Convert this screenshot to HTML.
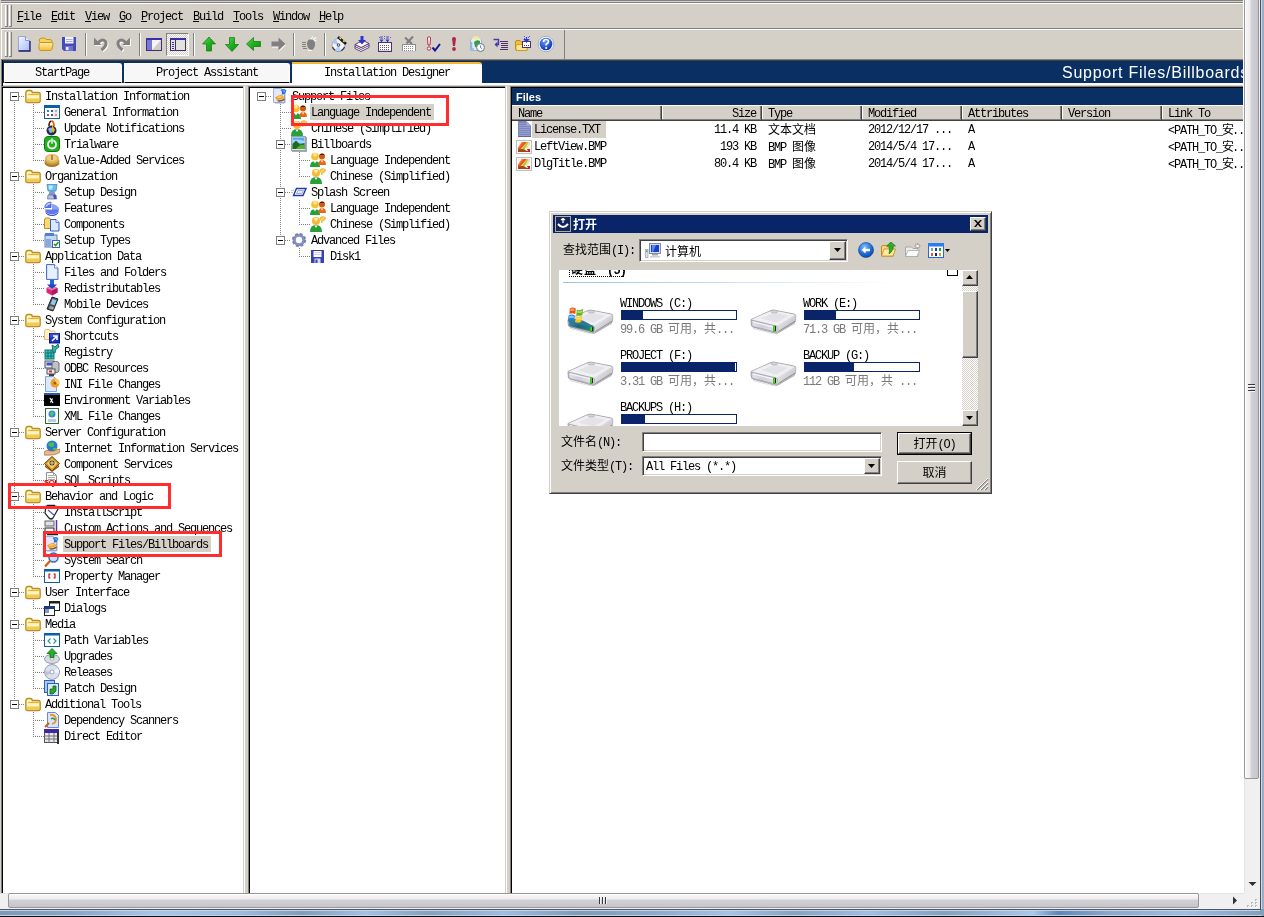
<!DOCTYPE html>
<html lang="en"><head><meta charset="utf-8"><title>InstallShield - Support Files/Billboards</title>
<style>
html,body{margin:0;padding:0}
body{will-change:transform;width:1264px;height:917px;overflow:hidden;background:#D4D0C8;position:relative;font-family:"Liberation Mono","Noto Sans CJK SC",monospace;font-size:12px;color:#000}
div,svg{position:absolute}
div{box-sizing:border-box}
.t{font-family:"Liberation Mono","Noto Sans CJK SC",monospace;font-size:12px;letter-spacing:-1.2px;white-space:pre;line-height:16px;height:16px}
.c{font-family:"Liberation Sans","Noto Sans CJK SC",sans-serif;font-size:12px;letter-spacing:0}
.g{color:#7A7A7A}
.u{text-decoration:underline;text-underline-offset:1px}
.hd{font-family:"Liberation Sans",sans-serif;font-weight:bold;color:#fff;white-space:pre}
</style></head>
<body>
<!-- top chrome -->
<div style="left:1px;top:0px;width:1243px;height:1px;background:#808080;"></div>
<div style="left:1px;top:2px;width:1243px;height:1px;background:#808080;"></div>
<div style="left:1px;top:3px;width:1243px;height:1px;background:#FFFFFF;"></div>
<div style="left:1px;top:3px;width:1px;height:56px;background:#FFFFFF;"></div>
<div style="left:5px;top:5px;width:1px;height:22px;background:#FFFFFF;"></div>
<div style="left:7px;top:5px;width:1px;height:22px;background:#808080;"></div>
<div style="left:5px;top:26px;width:3px;height:1px;background:#808080;"></div>
<div style="left:9px;top:5px;width:1px;height:22px;background:#FFFFFF;"></div>
<div style="left:11px;top:5px;width:1px;height:22px;background:#808080;"></div>
<div style="left:9px;top:26px;width:3px;height:1px;background:#808080;"></div>
<div style="left:1px;top:28px;width:1243px;height:1px;background:#808080;"></div>
<div style="left:1px;top:29px;width:1243px;height:1px;background:#FFFFFF;"></div>
<div class="t" style="left:17px;top:9px;height:16px;line-height:16px;"><span class="u">F</span>ile</div>
<div class="t" style="left:51px;top:9px;height:16px;line-height:16px;"><span class="u">E</span>dit</div>
<div class="t" style="left:85px;top:9px;height:16px;line-height:16px;"><span class="u">V</span>iew</div>
<div class="t" style="left:119px;top:9px;height:16px;line-height:16px;"><span class="u">G</span>o</div>
<div class="t" style="left:141px;top:9px;height:16px;line-height:16px;"><span class="u">P</span>roject</div>
<div class="t" style="left:193px;top:9px;height:16px;line-height:16px;"><span class="u">B</span>uild</div>
<div class="t" style="left:233px;top:9px;height:16px;line-height:16px;"><span class="u">T</span>ools</div>
<div class="t" style="left:273px;top:9px;height:16px;line-height:16px;"><span class="u">W</span>indow</div>
<div class="t" style="left:319px;top:9px;height:16px;line-height:16px;"><span class="u">H</span>elp</div>
<div style="left:5px;top:32px;width:1px;height:25px;background:#FFFFFF;"></div>
<div style="left:7px;top:32px;width:1px;height:25px;background:#808080;"></div>
<div style="left:5px;top:56px;width:3px;height:1px;background:#808080;"></div>
<div style="left:9px;top:32px;width:1px;height:25px;background:#FFFFFF;"></div>
<div style="left:11px;top:32px;width:1px;height:25px;background:#808080;"></div>
<div style="left:9px;top:56px;width:3px;height:1px;background:#808080;"></div>
<div style="left:564px;top:30px;width:1px;height:29px;background:#808080;"></div>
<div style="left:1px;top:59px;width:1243px;height:1px;background:#808080;"></div>
<div style="left:85px;top:33px;width:1px;height:23px;background:#808080;"></div>
<div style="left:86px;top:33px;width:1px;height:23px;background:#FFFFFF;"></div>
<div style="left:139px;top:33px;width:1px;height:23px;background:#808080;"></div>
<div style="left:140px;top:33px;width:1px;height:23px;background:#FFFFFF;"></div>
<div style="left:193px;top:33px;width:1px;height:23px;background:#808080;"></div>
<div style="left:194px;top:33px;width:1px;height:23px;background:#FFFFFF;"></div>
<div style="left:293px;top:33px;width:1px;height:23px;background:#808080;"></div>
<div style="left:294px;top:33px;width:1px;height:23px;background:#FFFFFF;"></div>
<div style="left:324px;top:33px;width:1px;height:23px;background:#808080;"></div>
<div style="left:325px;top:33px;width:1px;height:23px;background:#FFFFFF;"></div>
<div style="left:166px;top:33px;width:23px;height:23px;background:repeating-conic-gradient(#fff 0 25%,#D4D0C8 0 50%) 0 0/2px 2px;border:1px solid;border-color:#808080 #fff #fff #808080;"></div>
<!-- toolbar icons -->
<svg style="left:16px;top:36px" width="16" height="16" viewBox="0 0 16 16"><defs><linearGradient id="nw" x1="0" y1="0" x2="1" y2="1"><stop offset="0" stop-color="#F4F7FF"/><stop offset="1" stop-color="#A8BCF8"/></linearGradient></defs><path d="M2.500 0.500 H9.500 L13.500 4.500 V14.500 H2.500z" fill="url(#nw)" stroke="#98A8E0"/><path d="M9.500 0.500 V4.500 H13.500" fill="#E8EEFF" stroke="#7080C8" stroke-width=".8"/><path d="M2.500 15 H14 V5" fill="none" stroke="#181C70" stroke-width="1.300"/></svg>
<svg style="left:38px;top:36px" width="16" height="16" viewBox="0 0 16 16"><defs><linearGradient id="fo" x1="0" y1="0" x2="0" y2="1"><stop offset="0" stop-color="#FFF3B0"/><stop offset="1" stop-color="#F2BC38"/></linearGradient></defs><path d="M1 5 Q1 2 4 2 H6 Q7.500 2 8 3.500 H12 Q14 3.500 14 5.500 V7 H3z" fill="#F6D060" stroke="#CE9418"/><path d="M1 13 Q0.500 8 2 6.500 H14 Q15.500 6.500 15 8.500 L14 13 Q13.500 14.500 12 14.500 H3 Q1.200 14.500 1 13z" fill="url(#fo)" stroke="#CE9418"/></svg>
<svg style="left:61px;top:36px" width="16" height="16" viewBox="0 0 16 16"><path d="M1 1 H15 V15 H3 L1 13z" fill="#4848B8"/><rect x="4" y="1" width="8.500" height="6.500" fill="#F0F2FF"/><path d="M5 3.500H11.500M5 5.500H11.500" stroke="#A8B0E0"/><rect x="4" y="10" width="8" height="5" fill="#6C74D0"/><rect x="5" y="11" width="2.500" height="3" fill="#E8ECFF"/></svg>
<svg style="left:93px;top:36px" width="16" height="16" viewBox="0 0 16 16"><g transform="translate(1,1)" opacity=".9"><path d="M1 1.500 V9 H8.500z" fill="#fff"/><path d="M5 7 Q9 2 12.500 5.500 Q14.500 9.500 8.500 14" fill="none" stroke="#fff" stroke-width="3"/></g><path d="M1 1.500 V9 H8.500z" fill="#808080"/><path d="M5 7 Q9 2 12.500 5.500 Q14.500 9.500 8.500 14" fill="none" stroke="#808080" stroke-width="3"/></svg>
<svg style="left:115px;top:36px" width="16" height="16" viewBox="0 0 16 16"><g transform="translate(1,1)" opacity=".9"><path d="M15 1.500 V9 H7.500z" fill="#fff"/><path d="M11 7 Q7 2 3.500 5.500 Q1.500 9.500 7.500 14" fill="none" stroke="#fff" stroke-width="3"/></g><path d="M15 1.500 V9 H7.500z" fill="#808080"/><path d="M11 7 Q7 2 3.500 5.500 Q1.500 9.500 7.500 14" fill="none" stroke="#808080" stroke-width="3"/></svg>
<svg style="left:146px;top:36px" width="16" height="16" viewBox="0 0 16 16"><rect x="0.500" y="2.500" width="15" height="12" fill="#F4F4F4" stroke="#403070"/><rect x="0" y="2" width="16" height="2" fill="#3830A8"/><rect x="1" y="4" width="5" height="10" fill="#7878D8"/><path d="M6 14 L15 4 V14z" fill="#D0CCC8"/></svg>
<svg style="left:170px;top:36px" width="16" height="16" viewBox="0 0 16 16"><rect x="0.500" y="2.500" width="15" height="12" fill="#E4E2DE" stroke="#403060"/><rect x="0" y="2" width="16" height="2" fill="#3830A8"/><path d="M5.500 4 V14" stroke="#403060"/><path d="M2 6.500h2M2 8.500h2M2 10.500h2M2 12.500h2" stroke="#3838C0"/></svg>
<svg style="left:201px;top:36px" width="16" height="16" viewBox="0 0 16 16"><defs><linearGradient id="gr" x1="0" y1="0" x2="1" y2="1"><stop offset="0" stop-color="#58D850"/><stop offset=".5" stop-color="#20B020"/><stop offset="1" stop-color="#0C8C0C"/></linearGradient></defs><path d="M8 1 L14.500 8 H10.500 V15 H5.500 V8 H1.500z" fill="url(#gr)" stroke="#0C780C" stroke-width=".7"/></svg>
<svg style="left:224px;top:36px" width="16" height="16" viewBox="0 0 16 16"><path d="M8 15.500 L14.500 8.500 H10.500 V1.500 H5.500 V8.500 H1.500z" fill="url(#gr)" stroke="#0C780C" stroke-width=".7"/></svg>
<svg style="left:246px;top:36px" width="16" height="16" viewBox="0 0 16 16"><path d="M0.500 8 L7.500 1.500 V5.500 H14.500 V10.500 H7.500 V14.500z" fill="url(#gr)" stroke="#0C780C" stroke-width=".7"/></svg>
<svg style="left:270px;top:36px" width="16" height="16" viewBox="0 0 16 16"><path d="M16 9 L9 2.500 V6.500 H2 V11.500 H9 V15.500z" fill="#fff"/><path d="M15.500 8 L8.500 1.500 V5.500 H1.500 V10.500 H8.500 V14.500z" fill="#808080"/></svg>
<svg style="left:301px;top:36px" width="16" height="16" viewBox="0 0 16 16"><path d="M6 8 Q6 3.500 9.500 3.500 Q14 3.500 14 8 Q14 12 11 14 L8 13 Q6 11 6 8z" fill="#808080"/><path d="M10 3 L12 0.500 M12 3.500 L15 1.500 M13.500 5 L15.500 4" stroke="#fff" stroke-width="1.100"/><path d="M1 6.500h4M1 8.500h4M1 10.500h4M2 12.500h4" stroke="#808080"/><path d="M7 14.500 h4" stroke="#fff"/></svg>
<svg style="left:331px;top:36px" width="16" height="16" viewBox="0 0 16 16"><circle cx="7.500" cy="9" r="6.500" fill="#F0F4FC" stroke="#8898B8" stroke-width=".8"/><path d="M1.500 11 A6.500 6.500 0 0 0 13.500 11" fill="none" stroke="#303848" stroke-width="1.200"/><path d="M7.500 9 L1.200 7 A6.500 6.500 0 0 1 5 3z" fill="#A8C8F0"/><path d="M7.500 9 L10 15 A6.500 6.500 0 0 1 4 14.500z" fill="#B8D4F4"/><circle cx="7.500" cy="9" r="1.800" fill="#585868"/><circle cx="7.500" cy="9" r=".7" fill="#fff"/><path d="M7 1 L15 8" stroke="#181818" stroke-width="2.600"/><path d="M8.500 1.500 L10 3 M12 4.500 L13.500 6" stroke="#F8E828" stroke-width="1.300"/></svg>
<svg style="left:354px;top:36px" width="16" height="16" viewBox="0 0 16 16"><path d="M1 12.500 L7 15.500 L15 11.500 V7.500 L7 11.500 L1 8.500z" fill="#fff" stroke="#503070" stroke-width=".9"/><path d="M1 10.500 L7 13.500 L15 9.500" fill="none" stroke="#503070" stroke-width=".9"/><path d="M1 8.500 L9 4.500 L15 7.500 L7 11.500z" fill="#fff" stroke="#503070" stroke-width=".9"/><path d="M6.500 0 h3 v4 h2.500 l-4 4.500 l-4-4.500 h2.500z" fill="#3038C8"/></svg>
<svg style="left:377px;top:36px" width="16" height="16" viewBox="0 0 16 16"><rect x="1.500" y="6.500" width="13" height="9" fill="#fff" stroke="#503070"/><path d="M1 15.500H15" stroke="#503070" stroke-width="1.400"/><path d="M3 9.5H13" stroke="#606070" stroke-dasharray="1 1"/><path d="M3 11.5H13" stroke="#606070" stroke-dasharray="1 1"/><path d="M3 13.5H13" stroke="#606070" stroke-dasharray="1 1"/><path d="M4.500 0.500V3 M10.500 0.500V3" stroke="#3038C8" stroke-dasharray="1 1" stroke-width="2.500"/><path d="M2.500 3.500 h4 l-2 3z M8.500 3.500 h4 l-2 3z" fill="#3038C8"/><path d="M2 1.500h1M7 0.500h1M13 1.500h1M7 2.500h1" stroke="#5860D8"/></svg>
<svg style="left:401px;top:36px" width="16" height="16" viewBox="0 0 16 16"><rect x="1.500" y="8.500" width="13" height="7" fill="#fff" stroke="#909090"/><path d="M1 16H15" stroke="#fff"/><path d="M3 10.5H13" stroke="#909090" stroke-dasharray="1 1"/><path d="M3 12.5H13" stroke="#909090" stroke-dasharray="1 1"/><path d="M3 14.5H13" stroke="#909090" stroke-dasharray="1 1"/><path d="M4 1.500 L11 8 M12 0.500 L5.500 7.500" stroke="#808080" stroke-width="2.200"/></svg>
<svg style="left:425px;top:36px" width="16" height="16" viewBox="0 0 16 16"><path d="M2.500 1.500 Q4 0 5.500 1.500 L5 9 H3z" fill="#fff" stroke="#B02848" stroke-width="1"/><circle cx="4" cy="12.500" r="1.700" fill="#fff" stroke="#B02848"/><path d="M7.500 11.500 L10 14.500 L15 8" fill="none" stroke="#101890" stroke-width="2"/></svg>
<svg style="left:446px;top:36px" width="16" height="16" viewBox="0 0 16 16"><path d="M6 3 Q6 1 8 1 Q10 1 10 3 L9 10 H7z" fill="#B02848"/><circle cx="8" cy="13" r="1.900" fill="#B02848"/></svg>
<svg style="left:469px;top:36px" width="16" height="16" viewBox="0 0 16 16"><path d="M1.500 3.500 L4 1.500 H10 L12.500 3.500 V14.500 H1.500z" fill="#E4EEF8" stroke="#A0B4CC"/><path d="M4 1 Q7-0.500 10 1 L12 3 H2.500z" fill="#F8E898"/><path d="M5 6 Q8 3 11 5 V9 Q9 12 6 11z" fill="#30A040"/><path d="M2.500 6 V13 H5" stroke="#88B8E8" stroke-width="1.600" fill="none"/><circle cx="11.500" cy="11.500" r="4" fill="#ECEEF4" stroke="#70788C" stroke-width="1"/><circle cx="11.500" cy="11.500" r="2.300" fill="#fff"/><path d="M11.500 9.500 V11.500 L13 12.500" stroke="#6068A0" fill="none" stroke-width=".9"/></svg>
<svg style="left:492px;top:36px" width="16" height="16" viewBox="0 0 16 16"><path d="M1.500 3.500 H6.500 V8.500 H4" fill="none" stroke="#4838A8" stroke-width="1.400"/><path d="M5.500 5.500 L2.500 8.500 L5.500 11.500z" fill="#4838A8"/><path d="M8 5.500H16M9 7.500H16M9 9.500H16M9 11.500H16M8 13.500H16" stroke="#503070"/></svg>
<svg style="left:515px;top:36px" width="16" height="16" viewBox="0 0 16 16"><path d="M0.500 6 Q0.500 4.500 2 4.500 H5 L6.500 6 H12 V14.500 H2 Q0.500 14.500 0.500 13z" fill="#F2C040" stroke="#C08C14"/><path d="M1 14 Q0.500 9 2 8.500 H13 L12 13.500 Q11.500 14.500 10.500 14.500 H2.500z" fill="#FBE58A" stroke="#C8941C" stroke-width=".8"/><rect x="7.500" y="5.500" width="8" height="6" fill="#fff" stroke="#503070"/><path d="M9 9.5H15" stroke="#404060" stroke-dasharray="1 1"/><path d="M11.500 1 V4 M9.500 3.500 h4 l-2 2.500z" stroke="#3038C8" fill="#3038C8" stroke-width="1.200"/><path d="M9 0.500h1M13 1.500h1M14 0.500h1M9 2.500h1" stroke="#5860D8"/></svg>
<svg style="left:537px;top:35px" width="18" height="18" viewBox="0 0 18 18"><defs><radialGradient id="hp" cx=".4" cy=".3" r=".8"><stop offset="0" stop-color="#6C98F8"/><stop offset=".7" stop-color="#1848C8"/><stop offset="1" stop-color="#0C2C90"/></radialGradient></defs><circle cx="9" cy="9" r="7.800" fill="#F0F4FF" stroke="#8890B8" stroke-width=".6"/><circle cx="9" cy="9" r="6.300" fill="url(#hp)"/><path d="M6.500 7 Q6.500 4.500 9 4.500 Q11.500 4.500 11.500 6.700 Q11.500 8 9.200 9.300 V10.500" fill="none" stroke="#fff" stroke-width="1.700"/><circle cx="9.200" cy="13" r="1.100" fill="#fff"/></svg>
<!-- tab strip -->
<div style="left:2px;top:60px;width:1242px;height:23px;background:#0A3063;"></div>
<div style="left:2px;top:60px;width:1242px;height:1px;background:#404040;"></div>
<div style="left:1px;top:60px;width:1px;height:833px;background:#808080;"></div>
<div style="left:2px;top:60px;width:1px;height:833px;background:#000;"></div>
<div style="left:4px;top:63px;width:118px;height:20px;background:#F7F7F7;border-radius:0 3px 0 0;border:1px solid #fff;border-bottom:1px solid #000;box-shadow:inset 0 -1px 0 #fff;"></div>
<div style="left:124px;top:63px;width:166px;height:20px;background:#F7F7F7;border-radius:0 3px 0 0;border:1px solid #fff;border-bottom:1px solid #000;box-shadow:inset 0 -1px 0 #fff;"></div>
<div style="left:292px;top:62px;width:190px;height:23px;background:#fff;border-top:2px solid #F5B731;border-radius:0 3px 0 0;"></div>
<div class="t" style="left:3px;top:65px;height:16px;line-height:16px;width:118px;text-align:center;">StartPage</div>
<div class="t" style="left:124px;top:65px;height:16px;line-height:16px;width:166px;text-align:center;">Project Assistant</div>
<div class="t" style="left:292px;top:65px;height:16px;line-height:16px;width:190px;text-align:center;">Installation Designer</div>
<div class="hd" style="left:1062px;top:63px;width:182px;height:20px;line-height:20px;font-size:16px;letter-spacing:0.75px;font-weight:normal;overflow:hidden;">Support Files/Billboards</div>
<div style="left:3px;top:83px;width:1241px;height:2px;background:#fff;"></div>
<div style="left:3px;top:85px;width:1241px;height:1px;background:#D4D0C8;"></div>
<div style="left:1px;top:86px;width:1243px;height:1px;background:#808080;"></div>
<div style="left:2px;top:87px;width:1242px;height:1px;background:#000;"></div>
<!-- panes -->
<div style="left:3px;top:88px;width:240px;height:805px;background:#fff;"></div>
<div style="left:243px;top:86px;width:5px;height:807px;background:#D4D0C8;"></div>
<div style="left:244px;top:86px;width:1px;height:807px;background:#fff;"></div>
<div style="left:248px;top:86px;width:1px;height:807px;background:#808080;"></div>
<div style="left:249px;top:87px;width:1px;height:806px;background:#000;"></div>
<div style="left:250px;top:88px;width:255px;height:805px;background:#fff;"></div>
<div style="left:505px;top:86px;width:5px;height:807px;background:#D4D0C8;"></div>
<div style="left:506px;top:86px;width:1px;height:807px;background:#fff;"></div>
<div style="left:510px;top:86px;width:1px;height:807px;background:#808080;"></div>
<div style="left:511px;top:87px;width:1px;height:806px;background:#000;"></div>
<div style="left:512px;top:88px;width:732px;height:805px;background:#fff;"></div>
<!-- left tree -->
<div style="left:14px;top:96px;width:1px;height:609px;background-image:repeating-linear-gradient(180deg,#808080 0 1px,transparent 1px 2px);"></div>
<div style="left:19px;top:96px;width:6px;height:1px;background-image:repeating-linear-gradient(90deg,#808080 0 1px,transparent 1px 2px);"></div>
<div style="left:10px;top:92px;width:9px;height:9px;background:#fff;border:1px solid #808080;"><div style="left:1px;top:3px;width:5px;height:1px;background:#000"></div></div>
<div style="left:33px;top:104px;width:1px;height:57px;background-image:repeating-linear-gradient(180deg,#808080 0 1px,transparent 1px 2px);"></div>
<svg style="left:25px;top:88px" width="16" height="16" viewBox="0 0 16 16"><path d="M0.800 5 Q0.800 2.500 3 2.500 H5.500 Q7 2.500 7.500 4.500 H13.500 Q15.200 4.500 15.200 6.500 V12.500 Q15.200 14.500 13.500 14.500 H2.500 Q0.800 14.500 0.800 12.500z" fill="#FBE890" stroke="#BE8C20" stroke-width="1.300"/><path d="M2 5 Q2 3.700 3 3.700 H5.500 L6.500 5.500 H2z" fill="#FFF8D0"/><path d="M2 7.500h12v3.500h-12z" fill="#FEF6C0"/><path d="M2 10.500h12v3h-12z" fill="#F2C858"/><path d="M3.500 6.500 H14" stroke="#D8A838" stroke-width=".8"/></svg>
<div class="t" style="left:45px;top:89px;height:16px;line-height:16px;">Installation Information</div>
<div style="left:33px;top:112px;width:11px;height:1px;background-image:repeating-linear-gradient(90deg,#808080 0 1px,transparent 1px 2px);"></div>
<svg style="left:44px;top:104px" width="16" height="16" viewBox="0 0 16 16"><rect x="0.5" y="1.5" width="15" height="13" fill="#fff" stroke="#0A5FA5"/><rect x="0" y="1" width="16" height="3" fill="#0A5FA5"/><rect x="3" y="6" width="2" height="2" fill="#3A8A8A"/><rect x="7" y="6" width="2" height="2" fill="#1E5FB0"/><rect x="11" y="6" width="2" height="2" fill="#1EC850"/><rect x="3" y="10" width="2" height="2" fill="#D04040"/><rect x="7" y="10" width="2" height="2" fill="#1E5FB0"/><rect x="11" y="10" width="2" height="2" fill="#B06010"/><rect x="9" y="5" width="5" height="8" fill="#F8C8F0" opacity=".5"/></svg>
<div class="t" style="left:64px;top:105px;height:16px;line-height:16px;">General Information</div>
<div style="left:33px;top:128px;width:11px;height:1px;background-image:repeating-linear-gradient(90deg,#808080 0 1px,transparent 1px 2px);"></div>
<svg style="left:44px;top:120px" width="16" height="16" viewBox="0 0 16 16"><circle cx="7.500" cy="10.500" r="5" fill="#20304A"/><path d="M4 9 q3-3 6 0 q-1 4-4 4z" fill="#8FB4E8"/><path d="M8 5 l3 5 l-2 3 l-1-3z" fill="#F8B020"/><path d="M5 6 q0-5 3-5 q2 1 2 5" fill="none" stroke="#E86010" stroke-width="1.6"/><path d="M5 6 q0-4 2-5" fill="none" stroke="#402010" stroke-width="1.2"/></svg>
<div class="t" style="left:64px;top:121px;height:16px;line-height:16px;">Update Notifications</div>
<div style="left:33px;top:144px;width:11px;height:1px;background-image:repeating-linear-gradient(90deg,#808080 0 1px,transparent 1px 2px);"></div>
<svg style="left:44px;top:136px" width="16" height="16" viewBox="0 0 16 16"><rect x="0.5" y="0.5" width="15" height="15" rx="3.5" fill="#22B022" stroke="#0E7A0E"/><circle cx="8" cy="8.500" r="4" fill="none" stroke="#fff" stroke-width="1.8"/><rect x="7" y="2" width="2" height="6" fill="#fff" stroke="#22B022" stroke-width=".6"/></svg>
<div class="t" style="left:64px;top:137px;height:16px;line-height:16px;">Trialware</div>
<div style="left:33px;top:160px;width:11px;height:1px;background-image:repeating-linear-gradient(90deg,#808080 0 1px,transparent 1px 2px);"></div>
<svg style="left:44px;top:152px" width="16" height="16" viewBox="0 0 16 16"><ellipse cx="8" cy="11" rx="7.500" ry="4" fill="#A8782A"/><ellipse cx="8" cy="9" rx="7.500" ry="4" fill="#C89A40"/><ellipse cx="8" cy="6.500" rx="7" ry="4.500" fill="#E0B860"/><ellipse cx="8" cy="6" rx="5" ry="3" fill="#F0D080"/><rect x="7.300" y="3" width="1.400" height="5" fill="#9A6A20"/></svg>
<div class="t" style="left:64px;top:153px;height:16px;line-height:16px;">Value-Added Services</div>
<div style="left:19px;top:176px;width:6px;height:1px;background-image:repeating-linear-gradient(90deg,#808080 0 1px,transparent 1px 2px);"></div>
<div style="left:10px;top:172px;width:9px;height:9px;background:#fff;border:1px solid #808080;"><div style="left:1px;top:3px;width:5px;height:1px;background:#000"></div></div>
<div style="left:33px;top:184px;width:1px;height:57px;background-image:repeating-linear-gradient(180deg,#808080 0 1px,transparent 1px 2px);"></div>
<svg style="left:25px;top:168px" width="16" height="16" viewBox="0 0 16 16"><path d="M0.800 5 Q0.800 2.500 3 2.500 H5.500 Q7 2.500 7.500 4.500 H13.500 Q15.200 4.500 15.200 6.500 V12.500 Q15.200 14.500 13.500 14.500 H2.500 Q0.800 14.500 0.800 12.500z" fill="#FBE890" stroke="#BE8C20" stroke-width="1.300"/><path d="M2 5 Q2 3.700 3 3.700 H5.500 L6.500 5.500 H2z" fill="#FFF8D0"/><path d="M2 7.500h12v3.500h-12z" fill="#FEF6C0"/><path d="M2 10.500h12v3h-12z" fill="#F2C858"/><path d="M3.500 6.500 H14" stroke="#D8A838" stroke-width=".8"/></svg>
<div class="t" style="left:45px;top:169px;height:16px;line-height:16px;">Organization</div>
<div style="left:33px;top:192px;width:11px;height:1px;background-image:repeating-linear-gradient(90deg,#808080 0 1px,transparent 1px 2px);"></div>
<svg style="left:44px;top:184px" width="16" height="16" viewBox="0 0 16 16"><path d="M3 0.500 H13 L12 7 H4z" fill="#68C0F0" stroke="#3878C8" stroke-width=".7"/><path d="M4.500 1.500 H9 L8 5.500 H5z" fill="#C0ECFF"/><path d="M5.500 7 H10.500 L11.500 11 H4.500z" fill="#8898C0"/><path d="M4 11 H12 L12.500 15 H3.500z" fill="#B8C4E0" stroke="#5868A8" stroke-width=".7"/><path d="M9 11 H12 L12.500 15 H10z" fill="#4858A8"/></svg>
<div class="t" style="left:64px;top:185px;height:16px;line-height:16px;">Setup Design</div>
<div style="left:33px;top:208px;width:11px;height:1px;background-image:repeating-linear-gradient(90deg,#808080 0 1px,transparent 1px 2px);"></div>
<svg style="left:44px;top:200px" width="16" height="16" viewBox="0 0 16 16"><path d="M1.500 10 A6.500 5 0 0 0 14.500 10 V12 A6.500 4 0 0 1 1.500 12z" fill="#3848C0"/><ellipse cx="8" cy="9.500" rx="6.800" ry="5" fill="#6078E8"/><path d="M8 9.500 V4.500 A6.800 5 0 0 1 14.800 9.500z" fill="#8CA0F8"/><path d="M8 9.500 H1.200 A6.800 5 0 0 1 8 4.500z" fill="#fff"/><path d="M7 7.500 H0.800 A6.500 5 0 0 1 7 2z" fill="#5878F0" stroke="#2838B0" stroke-width=".6"/><path d="M1 6.500 Q3 3 6.500 2.500 V4 Q3.500 4.500 2.500 6.500z" fill="#C8D8FF"/></svg>
<div class="t" style="left:64px;top:201px;height:16px;line-height:16px;">Features</div>
<div style="left:33px;top:224px;width:11px;height:1px;background-image:repeating-linear-gradient(90deg,#808080 0 1px,transparent 1px 2px);"></div>
<svg style="left:44px;top:216px" width="16" height="16" viewBox="0 0 16 16"><path d="M0.500 4 q0-2 2-2 h3 l1 1.500 h4 v9 h-10z" fill="#F8D878" stroke="#C48A1C"/><path d="M6.500 3.500 h5.500 l3 3 v8.500 h-8.500z" fill="#DCE8FF" stroke="#3060C0"/><path d="M12 3.500 v3 h3" fill="#fff" stroke="#3060C0" stroke-width=".8"/></svg>
<div class="t" style="left:64px;top:217px;height:16px;line-height:16px;">Components</div>
<div style="left:33px;top:240px;width:11px;height:1px;background-image:repeating-linear-gradient(90deg,#808080 0 1px,transparent 1px 2px);"></div>
<svg style="left:44px;top:232px" width="16" height="16" viewBox="0 0 16 16"><rect x="1" y="3" width="12" height="12" fill="#C8D8F0" stroke="#6080B0"/><rect x="1" y="1" width="9" height="3" fill="#5080D0"/><rect x="2" y="7" width="5" height="7" fill="#88A8E0"/><rect x="8.500" y="8.500" width="7" height="7" fill="#fff" stroke="#4060A0"/><path d="M10 12 l1.500 1.500 l3-3.500" fill="none" stroke="#18A018" stroke-width="1.600"/></svg>
<div class="t" style="left:64px;top:233px;height:16px;line-height:16px;">Setup Types</div>
<div style="left:19px;top:256px;width:6px;height:1px;background-image:repeating-linear-gradient(90deg,#808080 0 1px,transparent 1px 2px);"></div>
<div style="left:10px;top:252px;width:9px;height:9px;background:#fff;border:1px solid #808080;"><div style="left:1px;top:3px;width:5px;height:1px;background:#000"></div></div>
<div style="left:33px;top:264px;width:1px;height:41px;background-image:repeating-linear-gradient(180deg,#808080 0 1px,transparent 1px 2px);"></div>
<svg style="left:25px;top:248px" width="16" height="16" viewBox="0 0 16 16"><path d="M0.800 5 Q0.800 2.500 3 2.500 H5.500 Q7 2.500 7.500 4.500 H13.500 Q15.200 4.500 15.200 6.500 V12.500 Q15.200 14.500 13.500 14.500 H2.500 Q0.800 14.500 0.800 12.500z" fill="#FBE890" stroke="#BE8C20" stroke-width="1.300"/><path d="M2 5 Q2 3.700 3 3.700 H5.500 L6.500 5.500 H2z" fill="#FFF8D0"/><path d="M2 7.500h12v3.500h-12z" fill="#FEF6C0"/><path d="M2 10.500h12v3h-12z" fill="#F2C858"/><path d="M3.500 6.500 H14" stroke="#D8A838" stroke-width=".8"/></svg>
<div class="t" style="left:45px;top:249px;height:16px;line-height:16px;">Application Data</div>
<div style="left:33px;top:272px;width:11px;height:1px;background-image:repeating-linear-gradient(90deg,#808080 0 1px,transparent 1px 2px);"></div>
<svg style="left:44px;top:264px" width="16" height="16" viewBox="0 0 16 16"><path d="M2.500 0.500 h8 l3.500 3.500 v11.500 h-11.500z" fill="#CFE0FF" stroke="#5070C0"/><path d="M4 2 h6 l2.500 3 v9 h-8.500z" fill="#E8F0FF"/><path d="M10.500 0.500 v3.500 h3.500" fill="#fff" stroke="#5070C0" stroke-width=".8"/></svg>
<div class="t" style="left:64px;top:265px;height:16px;line-height:16px;">Files and Folders</div>
<div style="left:33px;top:288px;width:11px;height:1px;background-image:repeating-linear-gradient(90deg,#808080 0 1px,transparent 1px 2px);"></div>
<svg style="left:44px;top:280px" width="16" height="16" viewBox="0 0 16 16"><rect x="6" y="0" width="4" height="5" fill="#1868E0"/><path d="M3 4.500 H13 L8 9.500z" fill="#1848C0"/><path d="M2.500 8 L8 5.500 L13.500 8 V12.500 L8 15.500 L2.500 12.500z" fill="#E0207A"/><path d="M2.500 8 L8 10.500 L13.500 8 L8 6z" fill="#F878B0"/><path d="M8 10.500 V15.500 L13.500 12.500 V8z" fill="#B01860"/><path d="M5 6 H11 L8 9z" fill="#1848C0"/></svg>
<div class="t" style="left:64px;top:281px;height:16px;line-height:16px;">Redistributables</div>
<div style="left:33px;top:304px;width:11px;height:1px;background-image:repeating-linear-gradient(90deg,#808080 0 1px,transparent 1px 2px);"></div>
<svg style="left:44px;top:296px" width="16" height="16" viewBox="0 0 16 16"><path d="M8 1 l6 2 l-5 12 l-6-2z" fill="#505860" stroke="#202428"/><path d="M8.500 3 l4 1.300 l-2 5 l-4-1.300z" fill="#90C8F0"/><path d="M6 10 l4 1.300 l-1 2.500 l-4-1.300z" fill="#A0A8B0"/></svg>
<div class="t" style="left:64px;top:297px;height:16px;line-height:16px;">Mobile Devices</div>
<div style="left:19px;top:320px;width:6px;height:1px;background-image:repeating-linear-gradient(90deg,#808080 0 1px,transparent 1px 2px);"></div>
<div style="left:10px;top:316px;width:9px;height:9px;background:#fff;border:1px solid #808080;"><div style="left:1px;top:3px;width:5px;height:1px;background:#000"></div></div>
<div style="left:33px;top:328px;width:1px;height:89px;background-image:repeating-linear-gradient(180deg,#808080 0 1px,transparent 1px 2px);"></div>
<svg style="left:25px;top:312px" width="16" height="16" viewBox="0 0 16 16"><path d="M0.800 5 Q0.800 2.500 3 2.500 H5.500 Q7 2.500 7.500 4.500 H13.500 Q15.200 4.500 15.200 6.500 V12.500 Q15.200 14.500 13.500 14.500 H2.500 Q0.800 14.500 0.800 12.500z" fill="#FBE890" stroke="#BE8C20" stroke-width="1.300"/><path d="M2 5 Q2 3.700 3 3.700 H5.500 L6.500 5.500 H2z" fill="#FFF8D0"/><path d="M2 7.500h12v3.500h-12z" fill="#FEF6C0"/><path d="M2 10.500h12v3h-12z" fill="#F2C858"/><path d="M3.500 6.500 H14" stroke="#D8A838" stroke-width=".8"/></svg>
<div class="t" style="left:45px;top:313px;height:16px;line-height:16px;">System Configuration</div>
<div style="left:33px;top:336px;width:11px;height:1px;background-image:repeating-linear-gradient(90deg,#808080 0 1px,transparent 1px 2px);"></div>
<svg style="left:44px;top:328px" width="16" height="16" viewBox="0 0 16 16"><path d="M0.500 3.500 Q0.500 1.500 2.500 1.500 H5 L6 3 H11 V11.500 H0.500z" fill="#FDF0C8" stroke="#E8BC78"/><rect x="5.500" y="5.500" width="10" height="9.500" fill="#1830C8" stroke="#101870"/><path d="M6 5.500 H15 V9 Q10 8 6 10z" fill="#3050E8"/><path d="M8 13 L12.500 8.500 M9 8 H13 V12" fill="none" stroke="#fff" stroke-width="1.600"/></svg>
<div class="t" style="left:64px;top:329px;height:16px;line-height:16px;">Shortcuts</div>
<div style="left:33px;top:352px;width:11px;height:1px;background-image:repeating-linear-gradient(90deg,#808080 0 1px,transparent 1px 2px);"></div>
<svg style="left:44px;top:344px" width="16" height="16" viewBox="0 0 16 16"><rect x="1" y="6" width="9" height="9" fill="#38C8C0" stroke="#107070"/><path d="M1 9 h9 M1 12 h9 M4 6 v9 M7 6 v9" stroke="#107070"/><path d="M8 1 l3 2 l3-3 l1 3 l-3 2 l-1 4 l-2-1z" fill="#30B8B0" stroke="#085858" stroke-width=".8"/></svg>
<div class="t" style="left:64px;top:345px;height:16px;line-height:16px;">Registry</div>
<div style="left:33px;top:368px;width:11px;height:1px;background-image:repeating-linear-gradient(90deg,#808080 0 1px,transparent 1px 2px);"></div>
<svg style="left:44px;top:360px" width="16" height="16" viewBox="0 0 16 16"><rect x="1" y="1" width="9" height="7" fill="#E8E8F0" stroke="#505058"/><rect x="2.500" y="2.500" width="6" height="3" fill="#3858C8"/><ellipse cx="11.500" cy="3" rx="3.500" ry="1.500" fill="#D0D0D8" stroke="#505058" stroke-width=".8"/><path d="M8 3 v8 a3.500 1.500 0 0 0 7 0 v-8" fill="#C0C0C8" stroke="#505058" stroke-width=".8"/><rect x="3" y="9" width="8" height="5" fill="#E8E8F0" stroke="#505058"/><rect x="5" y="10.500" width="3" height="2" fill="#D03030"/><rect x="5" y="14" width="5" height="2" fill="#404048"/></svg>
<div class="t" style="left:64px;top:361px;height:16px;line-height:16px;">ODBC Resources</div>
<div style="left:33px;top:384px;width:11px;height:1px;background-image:repeating-linear-gradient(90deg,#808080 0 1px,transparent 1px 2px);"></div>
<svg style="left:44px;top:376px" width="16" height="16" viewBox="0 0 16 16"><path d="M1.500 0.500 h8 l3 3 v12 h-11z" fill="#D8E8FF" stroke="#88A0D0"/><circle cx="11" cy="7" r="4.500" fill="#F0A020"/><path d="M11 7 v-4.500 a4.500 4.500 0 0 1 4 6z" fill="#F8D060"/><circle cx="11" cy="7" r="1.500" fill="#A05810"/></svg>
<div class="t" style="left:64px;top:377px;height:16px;line-height:16px;">INI File Changes</div>
<div style="left:33px;top:400px;width:11px;height:1px;background-image:repeating-linear-gradient(90deg,#808080 0 1px,transparent 1px 2px);"></div>
<svg style="left:44px;top:392px" width="16" height="16" viewBox="0 0 16 16"><rect x="0" y="1" width="16" height="13" fill="#000"/><rect x="0" y="1" width="16" height="2" fill="#2858A8"/><path d="M6 6 l3 5 M6.500 10.500 l2-4" stroke="#fff" stroke-width="1.200"/></svg>
<div class="t" style="left:64px;top:393px;height:16px;line-height:16px;">Environment Variables</div>
<div style="left:33px;top:416px;width:11px;height:1px;background-image:repeating-linear-gradient(90deg,#808080 0 1px,transparent 1px 2px);"></div>
<svg style="left:44px;top:408px" width="16" height="16" viewBox="0 0 16 16"><rect x="1.500" y="0.500" width="13" height="15" fill="#fff" stroke="#207030"/><circle cx="8" cy="6" r="3.500" fill="#3888E0"/><path d="M6 5 q2-2 4 0 q-1 3-3 3z" fill="#58C858"/><rect x="4" y="11" width="8" height="3" fill="#C0C8E8"/></svg>
<div class="t" style="left:64px;top:409px;height:16px;line-height:16px;">XML File Changes</div>
<div style="left:19px;top:432px;width:6px;height:1px;background-image:repeating-linear-gradient(90deg,#808080 0 1px,transparent 1px 2px);"></div>
<div style="left:10px;top:428px;width:9px;height:9px;background:#fff;border:1px solid #808080;"><div style="left:1px;top:3px;width:5px;height:1px;background:#000"></div></div>
<div style="left:33px;top:440px;width:1px;height:41px;background-image:repeating-linear-gradient(180deg,#808080 0 1px,transparent 1px 2px);"></div>
<svg style="left:25px;top:424px" width="16" height="16" viewBox="0 0 16 16"><path d="M0.800 5 Q0.800 2.500 3 2.500 H5.500 Q7 2.500 7.500 4.500 H13.500 Q15.200 4.500 15.200 6.500 V12.500 Q15.200 14.500 13.500 14.500 H2.500 Q0.800 14.500 0.800 12.500z" fill="#FBE890" stroke="#BE8C20" stroke-width="1.300"/><path d="M2 5 Q2 3.700 3 3.700 H5.500 L6.500 5.500 H2z" fill="#FFF8D0"/><path d="M2 7.500h12v3.500h-12z" fill="#FEF6C0"/><path d="M2 10.500h12v3h-12z" fill="#F2C858"/><path d="M3.500 6.500 H14" stroke="#D8A838" stroke-width=".8"/></svg>
<div class="t" style="left:45px;top:425px;height:16px;line-height:16px;">Server Configuration</div>
<div style="left:33px;top:448px;width:11px;height:1px;background-image:repeating-linear-gradient(90deg,#808080 0 1px,transparent 1px 2px);"></div>
<svg style="left:44px;top:440px" width="16" height="16" viewBox="0 0 16 16"><circle cx="8" cy="6" r="5.500" fill="#2878D8"/><path d="M4 4 q3-3 6-1 q1 3-2 4 q-3 0-4-3z" fill="#48C048"/><path d="M9 8 q3-1 4 1 q-2 2-4 1z" fill="#48C048"/><path d="M0 12 q3-3 6-1 l4 0 q3-2 6-2 v3 q-5 4-16 3z" fill="#E8B888" stroke="#905830" stroke-width=".6"/></svg>
<div class="t" style="left:64px;top:441px;height:16px;line-height:16px;">Internet Information Services</div>
<div style="left:33px;top:464px;width:11px;height:1px;background-image:repeating-linear-gradient(90deg,#808080 0 1px,transparent 1px 2px);"></div>
<svg style="left:44px;top:456px" width="16" height="16" viewBox="0 0 16 16"><path d="M8 0.500 l7.500 7 l-7.500 7.500 l-7.500-7.500z" fill="#D89830" stroke="#704008"/><path d="M8 3 l5 4.500 l-5 5 l-5-5z" fill="#F8D870"/><circle cx="8" cy="7" r="2.500" fill="#303030"/><path d="M8 5 v4 M6 7 h4" stroke="#F8E080" stroke-width="1"/><path d="M1 9 l7 6 l7-6 v2 l-7 5 l-7-5z" fill="#905810"/></svg>
<div class="t" style="left:64px;top:457px;height:16px;line-height:16px;">Component Services</div>
<div style="left:33px;top:480px;width:11px;height:1px;background-image:repeating-linear-gradient(90deg,#808080 0 1px,transparent 1px 2px);"></div>
<svg style="left:44px;top:472px" width="16" height="16" viewBox="0 0 16 16"><path d="M2.500 0.500 H9.500 L12.500 3.500 V11.500 H2.500z" fill="#fff" stroke="#909090"/><path d="M4 3.500 H9 M4 5.500 H11 M4 7.500 H11" stroke="#A8A8A8"/><path d="M9.500 0.500 V3.500 H12.500" fill="none" stroke="#909090" stroke-width=".8"/><text x="0" y="12.500" font-family="Liberation Sans, sans-serif" font-weight="bold" font-size="8" fill="#C00000" letter-spacing="-0.500">SQL</text></svg>
<div class="t" style="left:64px;top:473px;height:16px;line-height:16px;">SQL Scripts</div>
<div style="left:19px;top:496px;width:6px;height:1px;background-image:repeating-linear-gradient(90deg,#808080 0 1px,transparent 1px 2px);"></div>
<div style="left:10px;top:492px;width:9px;height:9px;background:#fff;border:1px solid #808080;"><div style="left:1px;top:3px;width:5px;height:1px;background:#000"></div></div>
<div style="left:33px;top:504px;width:1px;height:73px;background-image:repeating-linear-gradient(180deg,#808080 0 1px,transparent 1px 2px);"></div>
<svg style="left:25px;top:488px" width="16" height="16" viewBox="0 0 16 16"><path d="M0.800 5 Q0.800 2.500 3 2.500 H5.500 Q7 2.500 7.500 4.500 H13.500 Q15.200 4.500 15.200 6.500 V12.500 Q15.200 14.500 13.500 14.500 H2.500 Q0.800 14.500 0.800 12.500z" fill="#FBE890" stroke="#BE8C20" stroke-width="1.300"/><path d="M2 5 Q2 3.700 3 3.700 H5.500 L6.500 5.500 H2z" fill="#FFF8D0"/><path d="M2 7.500h12v3.500h-12z" fill="#FEF6C0"/><path d="M2 10.500h12v3h-12z" fill="#F2C858"/><path d="M3.500 6.500 H14" stroke="#D8A838" stroke-width=".8"/></svg>
<div class="t" style="left:45px;top:489px;height:16px;line-height:16px;">Behavior and Logic</div>
<div style="left:33px;top:512px;width:11px;height:1px;background-image:repeating-linear-gradient(90deg,#808080 0 1px,transparent 1px 2px);"></div>
<svg style="left:44px;top:504px" width="16" height="16" viewBox="0 0 16 16"><path d="M2 2 h9 q3 0 3 3 l-5 9 q-2 2-4 0 l-4-5z" fill="#fff" stroke="#202020" stroke-width="1.200"/><path d="M4 6 l6 5" stroke="#4060C0" stroke-width="1.200"/><path d="M3 1.500 h8" stroke="#202020" stroke-width="1.500"/></svg>
<div class="t" style="left:64px;top:505px;height:16px;line-height:16px;">InstallScript</div>
<div style="left:33px;top:528px;width:11px;height:1px;background-image:repeating-linear-gradient(90deg,#808080 0 1px,transparent 1px 2px);"></div>
<svg style="left:44px;top:520px" width="16" height="16" viewBox="0 0 16 16"><rect x="1" y="1" width="9" height="5" fill="#E0E0E8" stroke="#606068"/><rect x="1" y="8" width="9" height="5" fill="#fff" stroke="#202020"/><path d="M12.500 0 v13" stroke="#6030A0" stroke-width="1.500"/><path d="M3 14.500 h11" stroke="#202020" stroke-width="1.500"/></svg>
<div class="t" style="left:64px;top:521px;height:16px;line-height:16px;">Custom Actions and Sequences</div>
<div style="left:33px;top:544px;width:11px;height:1px;background-image:repeating-linear-gradient(90deg,#808080 0 1px,transparent 1px 2px);"></div>
<svg style="left:44px;top:536px" width="16" height="16" viewBox="0 0 16 16"><path d="M1.500 0.500 H9.500 L12.500 3.500 V14.500 H1.500z" fill="#E4E8FF" stroke="#A4ACE4"/><path d="M12.500 15 H3 M13 4 V15" stroke="#9098B0" stroke-width=".8"/><path d="M8.500 2 Q12 0 14.500 2.500 L13 5.500 Q11.500 7 9.500 6.300 Q11 4 8.500 2z" fill="#2C70E0"/><path d="M10 2.500 Q12 1.800 13.500 3 L12.500 4.500 Q11.500 3 10 2.500z" fill="#78B0F8"/><path d="M3 9.500 Q6 6.500 10 7 L12.500 9.500 Q9 12.500 4.500 11.800z" fill="#F8A020"/><path d="M5 9 Q7 7.800 9.500 8 L10.500 9 Q8 10 5.500 10z" fill="#FCD070"/><path d="M5 12 Q9 13 12.300 10.300 L12.800 12 Q9 14.500 6 13.500z" fill="#6C5C48"/></svg>
<div style="left:63px;top:536px;width:148px;height:16px;background:#D4D0C8;"></div>
<div class="t" style="left:64px;top:537px;height:16px;line-height:16px;">Support Files/Billboards</div>
<div style="left:33px;top:560px;width:11px;height:1px;background-image:repeating-linear-gradient(90deg,#808080 0 1px,transparent 1px 2px);"></div>
<svg style="left:44px;top:552px" width="16" height="16" viewBox="0 0 16 16"><circle cx="9.500" cy="5.500" r="4.500" fill="#C8E0FF" stroke="#3868C0" stroke-width="1.500"/><path d="M6 9 l-5 5.500" stroke="#D06010" stroke-width="2.200"/></svg>
<div class="t" style="left:64px;top:553px;height:16px;line-height:16px;">System Search</div>
<div style="left:33px;top:576px;width:11px;height:1px;background-image:repeating-linear-gradient(90deg,#808080 0 1px,transparent 1px 2px);"></div>
<svg style="left:44px;top:568px" width="16" height="16" viewBox="0 0 16 16"><rect x="0.500" y="1.500" width="15" height="13" fill="#fff" stroke="#0A5FA5"/><rect x="0" y="1" width="16" height="2.500" fill="#0A5FA5"/><path d="M6.500 6 h-1.500 v4 h1.500 M9.500 6 h1.500 v4 h-1.500" fill="none" stroke="#C01010" stroke-width="1.200"/></svg>
<div class="t" style="left:64px;top:569px;height:16px;line-height:16px;">Property Manager</div>
<div style="left:19px;top:592px;width:6px;height:1px;background-image:repeating-linear-gradient(90deg,#808080 0 1px,transparent 1px 2px);"></div>
<div style="left:10px;top:588px;width:9px;height:9px;background:#fff;border:1px solid #808080;"><div style="left:1px;top:3px;width:5px;height:1px;background:#000"></div></div>
<div style="left:33px;top:600px;width:1px;height:9px;background-image:repeating-linear-gradient(180deg,#808080 0 1px,transparent 1px 2px);"></div>
<svg style="left:25px;top:584px" width="16" height="16" viewBox="0 0 16 16"><path d="M0.800 5 Q0.800 2.500 3 2.500 H5.500 Q7 2.500 7.500 4.500 H13.500 Q15.200 4.500 15.200 6.500 V12.500 Q15.200 14.500 13.500 14.500 H2.500 Q0.800 14.500 0.800 12.500z" fill="#FBE890" stroke="#BE8C20" stroke-width="1.300"/><path d="M2 5 Q2 3.700 3 3.700 H5.500 L6.500 5.500 H2z" fill="#FFF8D0"/><path d="M2 7.500h12v3.500h-12z" fill="#FEF6C0"/><path d="M2 10.500h12v3h-12z" fill="#F2C858"/><path d="M3.500 6.500 H14" stroke="#D8A838" stroke-width=".8"/></svg>
<div class="t" style="left:45px;top:585px;height:16px;line-height:16px;">User Interface</div>
<div style="left:33px;top:608px;width:11px;height:1px;background-image:repeating-linear-gradient(90deg,#808080 0 1px,transparent 1px 2px);"></div>
<svg style="left:44px;top:600px" width="16" height="16" viewBox="0 0 16 16"><rect x="5.500" y="1.500" width="10" height="9" fill="#fff" stroke="#202020"/><rect x="5" y="1" width="11" height="2.500" fill="#202020"/><rect x="0.500" y="6.500" width="10" height="9" fill="#fff" stroke="#202020"/><rect x="0" y="6" width="11" height="3" fill="#203880"/><rect x="1" y="9" width="4" height="4" fill="#8098D0"/></svg>
<div class="t" style="left:64px;top:601px;height:16px;line-height:16px;">Dialogs</div>
<div style="left:19px;top:624px;width:6px;height:1px;background-image:repeating-linear-gradient(90deg,#808080 0 1px,transparent 1px 2px);"></div>
<div style="left:10px;top:620px;width:9px;height:9px;background:#fff;border:1px solid #808080;"><div style="left:1px;top:3px;width:5px;height:1px;background:#000"></div></div>
<div style="left:33px;top:632px;width:1px;height:57px;background-image:repeating-linear-gradient(180deg,#808080 0 1px,transparent 1px 2px);"></div>
<svg style="left:25px;top:616px" width="16" height="16" viewBox="0 0 16 16"><path d="M0.800 5 Q0.800 2.500 3 2.500 H5.500 Q7 2.500 7.500 4.500 H13.500 Q15.200 4.500 15.200 6.500 V12.500 Q15.200 14.500 13.500 14.500 H2.500 Q0.800 14.500 0.800 12.500z" fill="#FBE890" stroke="#BE8C20" stroke-width="1.300"/><path d="M2 5 Q2 3.700 3 3.700 H5.500 L6.500 5.500 H2z" fill="#FFF8D0"/><path d="M2 7.500h12v3.500h-12z" fill="#FEF6C0"/><path d="M2 10.500h12v3h-12z" fill="#F2C858"/><path d="M3.500 6.500 H14" stroke="#D8A838" stroke-width=".8"/></svg>
<div class="t" style="left:45px;top:617px;height:16px;line-height:16px;">Media</div>
<div style="left:33px;top:640px;width:11px;height:1px;background-image:repeating-linear-gradient(90deg,#808080 0 1px,transparent 1px 2px);"></div>
<svg style="left:44px;top:632px" width="16" height="16" viewBox="0 0 16 16"><rect x="0.500" y="1.500" width="15" height="13" fill="#fff" stroke="#0A5FA5"/><rect x="0" y="1" width="16" height="2.500" fill="#0A5FA5"/><path d="M6.500 6.500 l-2.500 2.500 l2.500 2.500 M9.500 6.500 l2.500 2.500 l-2.500 2.500" fill="none" stroke="#2890A0" stroke-width="1.100"/></svg>
<div class="t" style="left:64px;top:633px;height:16px;line-height:16px;">Path Variables</div>
<div style="left:33px;top:656px;width:11px;height:1px;background-image:repeating-linear-gradient(90deg,#808080 0 1px,transparent 1px 2px);"></div>
<svg style="left:44px;top:648px" width="16" height="16" viewBox="0 0 16 16"><ellipse cx="8" cy="11" rx="7.500" ry="4.500" fill="#D8DCE8" stroke="#808898" stroke-width=".8"/><ellipse cx="8" cy="11" rx="2" ry="1.200" fill="#fff" stroke="#808898" stroke-width=".6"/><path d="M8 0.500 l5 5 h-3 v4 h-4 v-4 h-3z" fill="#28B028" stroke="#0C700C" stroke-width=".8"/></svg>
<div class="t" style="left:64px;top:649px;height:16px;line-height:16px;">Upgrades</div>
<div style="left:33px;top:672px;width:11px;height:1px;background-image:repeating-linear-gradient(90deg,#808080 0 1px,transparent 1px 2px);"></div>
<svg style="left:44px;top:664px" width="16" height="16" viewBox="0 0 16 16"><circle cx="8" cy="8" r="7.500" fill="#DCE0EC" stroke="#8088A0" stroke-width=".8"/><path d="M8 8 l6-4 a7.500 7.500 0 0 1 1 5z" fill="#F0F4FF"/><path d="M8 8 l-6 4 a7.500 7.500 0 0 1-1-5z" fill="#C0C4D8"/><circle cx="8" cy="8" r="2" fill="#fff" stroke="#8088A0" stroke-width=".7"/></svg>
<div class="t" style="left:64px;top:665px;height:16px;line-height:16px;">Releases</div>
<div style="left:33px;top:688px;width:11px;height:1px;background-image:repeating-linear-gradient(90deg,#808080 0 1px,transparent 1px 2px);"></div>
<svg style="left:44px;top:680px" width="16" height="16" viewBox="0 0 16 16"><rect x="0.500" y="0.500" width="10" height="12" fill="#A8C8F8" stroke="#3060C0"/><rect x="3.500" y="3.500" width="11" height="12" fill="#D8E8FF" stroke="#3060C0"/><path d="M6 9 h3 v-3 h3 v5 l-3 3 h-3z" fill="#28A828" stroke="#0C600C" stroke-width=".7"/></svg>
<div class="t" style="left:64px;top:681px;height:16px;line-height:16px;">Patch Design</div>
<div style="left:19px;top:704px;width:6px;height:1px;background-image:repeating-linear-gradient(90deg,#808080 0 1px,transparent 1px 2px);"></div>
<div style="left:10px;top:700px;width:9px;height:9px;background:#fff;border:1px solid #808080;"><div style="left:1px;top:3px;width:5px;height:1px;background:#000"></div></div>
<div style="left:33px;top:712px;width:1px;height:25px;background-image:repeating-linear-gradient(180deg,#808080 0 1px,transparent 1px 2px);"></div>
<svg style="left:25px;top:696px" width="16" height="16" viewBox="0 0 16 16"><path d="M0.800 5 Q0.800 2.500 3 2.500 H5.500 Q7 2.500 7.500 4.500 H13.500 Q15.200 4.500 15.200 6.500 V12.500 Q15.200 14.500 13.500 14.500 H2.500 Q0.800 14.500 0.800 12.500z" fill="#FBE890" stroke="#BE8C20" stroke-width="1.300"/><path d="M2 5 Q2 3.700 3 3.700 H5.500 L6.500 5.500 H2z" fill="#FFF8D0"/><path d="M2 7.500h12v3.500h-12z" fill="#FEF6C0"/><path d="M2 10.500h12v3h-12z" fill="#F2C858"/><path d="M3.500 6.500 H14" stroke="#D8A838" stroke-width=".8"/></svg>
<div class="t" style="left:45px;top:697px;height:16px;line-height:16px;">Additional Tools</div>
<div style="left:33px;top:720px;width:11px;height:1px;background-image:repeating-linear-gradient(90deg,#808080 0 1px,transparent 1px 2px);"></div>
<svg style="left:44px;top:712px" width="16" height="16" viewBox="0 0 16 16"><path d="M3.500 0.500 h8 l3 3 v12 h-11z" fill="#D8E4FF" stroke="#7088C8"/><path d="M6 3 q5-1 6 4 q0 4-4 5" fill="none" stroke="#E89018" stroke-width="1.600"/><path d="M7 7 q2-2 4 1" fill="none" stroke="#28A028" stroke-width="1.500"/><path d="M5 11 l-4 4" stroke="#D06010" stroke-width="2"/></svg>
<div class="t" style="left:64px;top:713px;height:16px;line-height:16px;">Dependency Scanners</div>
<div style="left:33px;top:736px;width:11px;height:1px;background-image:repeating-linear-gradient(90deg,#808080 0 1px,transparent 1px 2px);"></div>
<svg style="left:44px;top:728px" width="16" height="16" viewBox="0 0 16 16"><rect x="0.500" y="1.500" width="14" height="13" fill="#E8E8EC" stroke="#505058"/><rect x="0" y="1" width="15" height="4" fill="#4028A0"/><path d="M0 8 h15 M0 11 h15 M5 5 v10 M10 5 v10" stroke="#707078"/><rect x="13" y="3" width="2" height="13" fill="#303038"/></svg>
<div class="t" style="left:64px;top:729px;height:16px;line-height:16px;">Direct Editor</div>
<!-- middle tree -->
<div style="left:266px;top:96px;width:6px;height:1px;background-image:repeating-linear-gradient(90deg,#808080 0 1px,transparent 1px 2px);"></div>
<div style="left:257px;top:92px;width:9px;height:9px;background:#fff;border:1px solid #808080;"><div style="left:1px;top:3px;width:5px;height:1px;background:#000"></div></div>
<div style="left:280px;top:104px;width:1px;height:137px;background-image:repeating-linear-gradient(180deg,#808080 0 1px,transparent 1px 2px);"></div>
<svg style="left:272px;top:88px" width="16" height="16" viewBox="0 0 16 16"><path d="M1.500 0.500 H9.500 L12.500 3.500 V14.500 H1.500z" fill="#E4E8FF" stroke="#A4ACE4"/><path d="M12.500 15 H3 M13 4 V15" stroke="#9098B0" stroke-width=".8"/><path d="M8.500 2 Q12 0 14.500 2.500 L13 5.500 Q11.500 7 9.500 6.300 Q11 4 8.500 2z" fill="#2C70E0"/><path d="M10 2.500 Q12 1.800 13.500 3 L12.500 4.500 Q11.500 3 10 2.500z" fill="#78B0F8"/><path d="M3 9.500 Q6 6.500 10 7 L12.500 9.500 Q9 12.500 4.500 11.800z" fill="#F8A020"/><path d="M5 9 Q7 7.800 9.500 8 L10.500 9 Q8 10 5.500 10z" fill="#FCD070"/><path d="M5 12 Q9 13 12.300 10.300 L12.800 12 Q9 14.500 6 13.500z" fill="#6C5C48"/></svg>
<div class="t" style="left:292px;top:89px;height:16px;line-height:16px;">Support Files</div>
<div style="left:280px;top:112px;width:11px;height:1px;background-image:repeating-linear-gradient(90deg,#808080 0 1px,transparent 1px 2px);"></div>
<svg style="left:291px;top:104px" width="16" height="16" viewBox="0 0 16 16"><circle cx="5" cy="4.500" r="3.800" fill="#F8C030"/><path d="M3 2 q2-2 4 0 q0 2-2 3 q-2-1-2-3z" fill="#FFE890"/><path d="M0 15 q0-6 5-6 q5 0 5 6z" fill="#28A038"/><path d="M3.500 9 l1.500 2.500 l1.500-2.500z" fill="#fff"/><circle cx="12" cy="4.500" r="3" fill="#D85810"/><path d="M9 3.500 q3-4 6 0 q-3-1.500-6 0z" fill="#202020"/><path d="M8.500 13 q0-5 3.500-5 q4 0 4 5z" fill="#E86818"/><path d="M10.800 8.500 l1.200 2 l1.200-2z" fill="#fff"/></svg>
<div style="left:310px;top:104px;width:124px;height:16px;background:#D4D0C8;"></div>
<div class="t" style="left:311px;top:105px;height:16px;line-height:16px;">Language Independent</div>
<div style="left:280px;top:128px;width:11px;height:1px;background-image:repeating-linear-gradient(90deg,#808080 0 1px,transparent 1px 2px);"></div>
<svg style="left:291px;top:120px" width="16" height="16" viewBox="0 0 16 16"><circle cx="6" cy="5" r="4" fill="#F8B838"/><path d="M4 2.500 q2-2 4 0 q0 2-2 3 q-2-1-2-3z" fill="#FFE8A0"/><path d="M0 16 q0-7 6-7 q6 0 6 7z" fill="#28A038"/><path d="M4.500 9.500 l1.500 2.500 l1.500-2.500z" fill="#fff"/><path d="M10 1.500 q3-2 5.500 0 q0 3-2.500 3.500 l-1.500 2 v-2 q-1.500-1-1.500-3.500z" fill="#F8D060" stroke="#C89820" stroke-width=".5"/></svg>
<div class="t" style="left:311px;top:121px;height:16px;line-height:16px;">Chinese (Simplified)</div>
<div style="left:285px;top:144px;width:6px;height:1px;background-image:repeating-linear-gradient(90deg,#808080 0 1px,transparent 1px 2px);"></div>
<div style="left:276px;top:140px;width:9px;height:9px;background:#fff;border:1px solid #808080;"><div style="left:1px;top:3px;width:5px;height:1px;background:#000"></div></div>
<div style="left:299px;top:152px;width:1px;height:25px;background-image:repeating-linear-gradient(180deg,#808080 0 1px,transparent 1px 2px);"></div>
<svg style="left:291px;top:136px" width="16" height="16" viewBox="0 0 16 16"><rect x="1" y="1" width="15" height="15" fill="#A8A8B0"/><rect x="0.500" y="0.500" width="14" height="14" fill="#E0E4EC" stroke="#98A0B0"/><rect x="1.500" y="1.500" width="12" height="11.500" fill="#58A8F0"/><path d="M1.500 4 Q6 2.500 13.500 5 V7 H1.500z" fill="#A8D4F8"/><path d="M1.500 13 V8 L5 4.500 L9 8.500 L13.500 7 V13z" fill="#1C6C20"/><path d="M5 13 Q9 8 13.500 9 V13z" fill="#58B030"/></svg>
<div class="t" style="left:311px;top:137px;height:16px;line-height:16px;">Billboards</div>
<div style="left:299px;top:160px;width:11px;height:1px;background-image:repeating-linear-gradient(90deg,#808080 0 1px,transparent 1px 2px);"></div>
<svg style="left:310px;top:152px" width="16" height="16" viewBox="0 0 16 16"><circle cx="5" cy="4.500" r="3.800" fill="#F8C030"/><path d="M3 2 q2-2 4 0 q0 2-2 3 q-2-1-2-3z" fill="#FFE890"/><path d="M0 15 q0-6 5-6 q5 0 5 6z" fill="#28A038"/><path d="M3.500 9 l1.500 2.500 l1.500-2.500z" fill="#fff"/><circle cx="12" cy="4.500" r="3" fill="#D85810"/><path d="M9 3.500 q3-4 6 0 q-3-1.500-6 0z" fill="#202020"/><path d="M8.500 13 q0-5 3.500-5 q4 0 4 5z" fill="#E86818"/><path d="M10.800 8.500 l1.200 2 l1.200-2z" fill="#fff"/></svg>
<div class="t" style="left:330px;top:153px;height:16px;line-height:16px;">Language Independent</div>
<div style="left:299px;top:176px;width:11px;height:1px;background-image:repeating-linear-gradient(90deg,#808080 0 1px,transparent 1px 2px);"></div>
<svg style="left:310px;top:168px" width="16" height="16" viewBox="0 0 16 16"><circle cx="6" cy="5" r="4" fill="#F8B838"/><path d="M4 2.500 q2-2 4 0 q0 2-2 3 q-2-1-2-3z" fill="#FFE8A0"/><path d="M0 16 q0-7 6-7 q6 0 6 7z" fill="#28A038"/><path d="M4.500 9.500 l1.500 2.500 l1.500-2.500z" fill="#fff"/><path d="M10 1.500 q3-2 5.500 0 q0 3-2.500 3.500 l-1.500 2 v-2 q-1.500-1-1.500-3.500z" fill="#F8D060" stroke="#C89820" stroke-width=".5"/></svg>
<div class="t" style="left:330px;top:169px;height:16px;line-height:16px;">Chinese (Simplified)</div>
<div style="left:285px;top:192px;width:6px;height:1px;background-image:repeating-linear-gradient(90deg,#808080 0 1px,transparent 1px 2px);"></div>
<div style="left:276px;top:188px;width:9px;height:9px;background:#fff;border:1px solid #808080;"><div style="left:1px;top:3px;width:5px;height:1px;background:#000"></div></div>
<div style="left:299px;top:200px;width:1px;height:25px;background-image:repeating-linear-gradient(180deg,#808080 0 1px,transparent 1px 2px);"></div>
<svg style="left:291px;top:184px" width="16" height="16" viewBox="0 0 16 16"><path d="M5.500 4.500 H15 L12 11.500 H2.500z" fill="#fff" stroke="#1C3CA8" stroke-width="1.400"/><path d="M7 6.500 H12.500 L11 9.500 H5.500z" fill="#E4E8F4" stroke="#8890B0" stroke-width=".7"/><path d="M0 6.500H3M0 8.500H2" stroke="#B0B8D0" stroke-width=".8"/></svg>
<div class="t" style="left:311px;top:185px;height:16px;line-height:16px;">Splash Screen</div>
<div style="left:299px;top:208px;width:11px;height:1px;background-image:repeating-linear-gradient(90deg,#808080 0 1px,transparent 1px 2px);"></div>
<svg style="left:310px;top:200px" width="16" height="16" viewBox="0 0 16 16"><circle cx="5" cy="4.500" r="3.800" fill="#F8C030"/><path d="M3 2 q2-2 4 0 q0 2-2 3 q-2-1-2-3z" fill="#FFE890"/><path d="M0 15 q0-6 5-6 q5 0 5 6z" fill="#28A038"/><path d="M3.500 9 l1.500 2.500 l1.500-2.500z" fill="#fff"/><circle cx="12" cy="4.500" r="3" fill="#D85810"/><path d="M9 3.500 q3-4 6 0 q-3-1.500-6 0z" fill="#202020"/><path d="M8.500 13 q0-5 3.500-5 q4 0 4 5z" fill="#E86818"/><path d="M10.800 8.500 l1.200 2 l1.200-2z" fill="#fff"/></svg>
<div class="t" style="left:330px;top:201px;height:16px;line-height:16px;">Language Independent</div>
<div style="left:299px;top:224px;width:11px;height:1px;background-image:repeating-linear-gradient(90deg,#808080 0 1px,transparent 1px 2px);"></div>
<svg style="left:310px;top:216px" width="16" height="16" viewBox="0 0 16 16"><circle cx="6" cy="5" r="4" fill="#F8B838"/><path d="M4 2.500 q2-2 4 0 q0 2-2 3 q-2-1-2-3z" fill="#FFE8A0"/><path d="M0 16 q0-7 6-7 q6 0 6 7z" fill="#28A038"/><path d="M4.500 9.500 l1.500 2.500 l1.500-2.500z" fill="#fff"/><path d="M10 1.500 q3-2 5.500 0 q0 3-2.500 3.500 l-1.500 2 v-2 q-1.500-1-1.500-3.500z" fill="#F8D060" stroke="#C89820" stroke-width=".5"/></svg>
<div class="t" style="left:330px;top:217px;height:16px;line-height:16px;">Chinese (Simplified)</div>
<div style="left:285px;top:240px;width:6px;height:1px;background-image:repeating-linear-gradient(90deg,#808080 0 1px,transparent 1px 2px);"></div>
<div style="left:276px;top:236px;width:9px;height:9px;background:#fff;border:1px solid #808080;"><div style="left:1px;top:3px;width:5px;height:1px;background:#000"></div></div>
<div style="left:299px;top:248px;width:1px;height:9px;background-image:repeating-linear-gradient(180deg,#808080 0 1px,transparent 1px 2px);"></div>
<svg style="left:291px;top:232px" width="16" height="16" viewBox="0 0 16 16"><circle cx="8" cy="8" r="5.500" fill="none" stroke="#8890C0" stroke-width="3.400" stroke-dasharray="2.600 1.720"/><circle cx="8" cy="8" r="4.500" fill="none" stroke="#8890C0" stroke-width="2.600"/><circle cx="8" cy="8" r="5.800" fill="none" stroke="#606898" stroke-width=".5"/></svg>
<div class="t" style="left:311px;top:233px;height:16px;line-height:16px;">Advanced Files</div>
<div style="left:299px;top:256px;width:11px;height:1px;background-image:repeating-linear-gradient(90deg,#808080 0 1px,transparent 1px 2px);"></div>
<svg style="left:310px;top:248px" width="16" height="16" viewBox="0 0 16 16"><rect x="1.500" y="2.500" width="12" height="12" fill="#fff" stroke="#3038A8"/><rect x="1" y="2" width="2.500" height="13" fill="#3840B8"/><rect x="11.500" y="2" width="2.500" height="13" fill="#3840B8"/><rect x="1" y="9" width="13" height="6" fill="#3840B8"/><rect x="4.500" y="10.500" width="6" height="4.500" fill="#D8DCF0"/><rect x="5.500" y="11.500" width="2" height="3.500" fill="#3840B8"/><path d="M4.500 4.500H10.500M4.500 6.500H10.500" stroke="#C8CCE8"/></svg>
<div class="t" style="left:330px;top:249px;height:16px;line-height:16px;">Disk1</div>
<!-- files pane -->
<div style="left:512px;top:88px;width:732px;height:17px;background:#0A3063;"></div>
<div class="hd" style="left:516px;top:89px;height:16px;line-height:16px;font-size:11px;">Files</div>
<div style="left:512px;top:105px;width:732px;height:1px;background:#FFFFFF;"></div>
<div style="left:512px;top:106px;width:732px;height:13px;background:#D4D0C8;"></div>
<div style="left:512px;top:119px;width:732px;height:1px;background:#808080;"></div>
<div style="left:512px;top:120px;width:732px;height:1px;background:#404040;"></div>
<div style="left:660px;top:106px;width:1px;height:14px;background:#808080;"></div>
<div style="left:661px;top:106px;width:1px;height:14px;background:#404040;"></div>
<div class="t" style="left:518px;top:106px;height:16px;line-height:16px;">Name</div>
<div style="left:760px;top:106px;width:1px;height:14px;background:#808080;"></div>
<div style="left:761px;top:106px;width:1px;height:14px;background:#404040;"></div>
<div style="left:662px;top:106px;width:1px;height:13px;background:#FFFFFF;"></div>
<div class="t" style="left:662px;top:106px;height:16px;line-height:16px;width:94px;text-align:right;">Size</div>
<div style="left:860px;top:106px;width:1px;height:14px;background:#808080;"></div>
<div style="left:861px;top:106px;width:1px;height:14px;background:#404040;"></div>
<div style="left:762px;top:106px;width:1px;height:13px;background:#FFFFFF;"></div>
<div class="t" style="left:768px;top:106px;height:16px;line-height:16px;">Type</div>
<div style="left:960px;top:106px;width:1px;height:14px;background:#808080;"></div>
<div style="left:961px;top:106px;width:1px;height:14px;background:#404040;"></div>
<div style="left:862px;top:106px;width:1px;height:13px;background:#FFFFFF;"></div>
<div class="t" style="left:868px;top:106px;height:16px;line-height:16px;">Modified</div>
<div style="left:1060px;top:106px;width:1px;height:14px;background:#808080;"></div>
<div style="left:1061px;top:106px;width:1px;height:14px;background:#404040;"></div>
<div style="left:962px;top:106px;width:1px;height:13px;background:#FFFFFF;"></div>
<div class="t" style="left:968px;top:106px;height:16px;line-height:16px;">Attributes</div>
<div style="left:1160px;top:106px;width:1px;height:14px;background:#808080;"></div>
<div style="left:1161px;top:106px;width:1px;height:14px;background:#404040;"></div>
<div style="left:1062px;top:106px;width:1px;height:13px;background:#FFFFFF;"></div>
<div class="t" style="left:1068px;top:106px;height:16px;line-height:16px;">Version</div>
<div style="left:1162px;top:106px;width:1px;height:13px;background:#FFFFFF;"></div>
<div class="t" style="left:1168px;top:106px;height:16px;line-height:16px;">Link To</div>
<div style="left:532px;top:121px;width:74px;height:17px;background:#D4D0C8;"></div>
<svg style="left:518px;top:121px" width="13" height="16" viewBox="0 0 13 16"><path d="M0 0 H8.500 L13 4.500 V16 H0z" fill="#7C86BC"/><path d="M1 4.500H12M1 6.500H12M1 8.500H12M1 10.500H12M1 12.500H12M1 14.500H12" stroke="#98A2D0" stroke-width=".9"/><path d="M1 2.500H8" stroke="#98A2D0" stroke-width=".9" stroke-dasharray="2 1"/><path d="M8.500 0 L13 4.500 H13 V0z" fill="#fff"/><path d="M8.500 0 V4.500 H13" fill="#A4ACD8"/><path d="M0 15.500H13" stroke="#5C6698"/></svg>
<div class="t" style="left:534px;top:122px;height:17px;line-height:17px;">License.TXT</div>
<div class="t" style="left:662px;top:122px;height:17px;line-height:17px;width:94px;text-align:right;">11.4 KB</div>
<div class="t" style="left:768px;top:122px;height:17px;line-height:17px;"><span class="c">文本文档</span></div>
<div class="t" style="left:868px;top:122px;height:17px;line-height:17px;">2012/12/17 ...</div>
<div class="t" style="left:968px;top:122px;height:17px;line-height:17px;">A</div>
<div class="t" style="left:1168px;top:122px;height:17px;line-height:17px;width:76px;overflow:hidden;">&lt;PATH_TO_<span class="c">安</span><span style="margin-left:-2px">..</span></div>
<svg style="left:516px;top:140px" width="16" height="14" viewBox="0 0 16 14"><rect x="0.500" y="0.500" width="15" height="13" fill="#FAFAFA" stroke="#BEBEBE"/><rect x="2" y="2" width="12" height="10" fill="#FFF6E8"/><path d="M2 8 L6 2 H11 L4 10 H2z" fill="#F0501C"/><path d="M6 2 H8 L3 8 H2z" fill="#F87840"/><path d="M11 2 H14 L8 10 H5z" fill="#B8C820"/><path d="M12.500 2 H14 V4 L10 10 H8.500z" fill="#F0D8B8"/><path d="M2 10 Q6 8 10 10.500 L14 12 H2z" fill="#9C4818"/><rect x="11" y="9" width="3" height="3" fill="#D01818"/><path d="M9.500 8 L12 11" stroke="#fff" stroke-width=".8"/></svg>
<div class="t" style="left:534px;top:139px;height:17px;line-height:17px;">LeftView.BMP</div>
<div class="t" style="left:662px;top:139px;height:17px;line-height:17px;width:94px;text-align:right;">193 KB</div>
<div class="t" style="left:768px;top:139px;height:17px;line-height:17px;">BMP <span class="c">图像</span></div>
<div class="t" style="left:868px;top:139px;height:17px;line-height:17px;">2014/5/4 17...</div>
<div class="t" style="left:968px;top:139px;height:17px;line-height:17px;">A</div>
<div class="t" style="left:1168px;top:139px;height:17px;line-height:17px;width:76px;overflow:hidden;">&lt;PATH_TO_<span class="c">安</span><span style="margin-left:-2px">..</span></div>
<svg style="left:516px;top:157px" width="16" height="14" viewBox="0 0 16 14"><rect x="0.500" y="0.500" width="15" height="13" fill="#FAFAFA" stroke="#BEBEBE"/><rect x="2" y="2" width="12" height="10" fill="#FFF6E8"/><path d="M2 8 L6 2 H11 L4 10 H2z" fill="#F0501C"/><path d="M6 2 H8 L3 8 H2z" fill="#F87840"/><path d="M11 2 H14 L8 10 H5z" fill="#B8C820"/><path d="M12.500 2 H14 V4 L10 10 H8.500z" fill="#F0D8B8"/><path d="M2 10 Q6 8 10 10.500 L14 12 H2z" fill="#9C4818"/><rect x="11" y="9" width="3" height="3" fill="#D01818"/><path d="M9.500 8 L12 11" stroke="#fff" stroke-width=".8"/></svg>
<div class="t" style="left:534px;top:156px;height:17px;line-height:17px;">DlgTitle.BMP</div>
<div class="t" style="left:662px;top:156px;height:17px;line-height:17px;width:94px;text-align:right;">80.4 KB</div>
<div class="t" style="left:768px;top:156px;height:17px;line-height:17px;">BMP <span class="c">图像</span></div>
<div class="t" style="left:868px;top:156px;height:17px;line-height:17px;">2014/5/4 17...</div>
<div class="t" style="left:968px;top:156px;height:17px;line-height:17px;">A</div>
<div class="t" style="left:1168px;top:156px;height:17px;line-height:17px;width:76px;overflow:hidden;">&lt;PATH_TO_<span class="c">安</span><span style="margin-left:-2px">..</span></div>
<!-- open dialog -->
<div style="left:549px;top:211px;width:443px;height:283px;background:#D4D0C8;border:1px solid;border-color:#D4D0C8 #404040 #404040 #D4D0C8;box-shadow:inset 1px 1px 0 #fff,inset -1px -1px 0 #808080;"></div>
<div style="left:553px;top:215px;width:435px;height:18px;background:#0A246A;"></div>
<svg style="left:555px;top:216px" width="16" height="16" viewBox="0 0 16 16"><rect x="0.500" y="0.500" width="15" height="15" fill="#14245C" stroke="#B4AE98"/><path d="M3 8 q5 6 10 0" fill="none" stroke="#fff" stroke-width="2"/><path d="M8 3 v4 M6 4 l2-1.500 l2 1.500" stroke="#fff" stroke-width="1.300" fill="none"/></svg>
<div class="t" style="left:573px;top:217px;height:16px;line-height:16px;color:#fff;font-weight:bold;letter-spacing:1px;"><span class="c">打开</span></div>
<div style="left:970px;top:217px;width:16px;height:14px;background:#D4D0C8;border:1px solid;border-color:#fff #404040 #404040 #fff;box-shadow:inset -1px -1px 0 #808080;"><svg style="left:3px;top:2px" width="8" height="7" viewBox="0 0 8 7"><path d="M0 0h2l2 2.500l2-2.500h2l-3 3.500l3 3.500h-2l-2-2.500l-2 2.500h-2l3-3.500z" fill="#000"/></svg></div>
<div class="t" style="left:563px;top:242px;height:16px;line-height:16px;"><span class="c">查找范围</span>(I):</div>
<div style="left:639px;top:239px;width:209px;height:23px;background:#fff;border:1px solid;border-color:#808080 #fff #fff #808080;box-shadow:inset 1px 1px 0 #404040,inset -1px -1px 0 #D4D0C8;"></div>
<svg style="left:645px;top:243px" width="16" height="16" viewBox="0 0 16 16"><rect x="4.500" y="0.500" width="11" height="10" fill="#D8DCE8" stroke="#8890A0"/><rect x="6" y="2" width="8" height="7" fill="#1840D0"/><path d="M7 2 h4 l-3 7 h-1z" fill="#5888F0"/><rect x="7" y="11" width="6" height="1.500" fill="#A0A4B0"/><rect x="5" y="13" width="10" height="1.500" fill="#C8CCD4"/><rect x="0.500" y="6.500" width="2.500" height="8" fill="#E0E4EC" stroke="#8890A0" stroke-width=".6"/><rect x="1" y="7.500" width="1.500" height="1.500" fill="#20C020"/></svg>
<div class="t" style="left:665px;top:244px;height:16px;line-height:16px;"><span class="c">计算机</span></div>
<div style="left:829px;top:241px;width:17px;height:19px;background:#D4D0C8;border:1px solid;border-color:#fff #404040 #404040 #fff;box-shadow:inset -1px -1px 0 #808080;"><svg style="left:4px;top:6px" width="7" height="4" viewBox="0 0 7 4"><path d="M0 0h7l-3.500 4z" fill="#000"/></svg></div>
<svg style="left:858px;top:242px" width="16" height="16" viewBox="0 0 16 16"><defs><radialGradient id="bk" cx=".4" cy=".3" r=".8"><stop offset="0" stop-color="#7CC0FF"/><stop offset=".6" stop-color="#1C68D0"/><stop offset="1" stop-color="#0C3C98"/></radialGradient></defs><circle cx="8" cy="8" r="7.500" fill="url(#bk)" stroke="#0C3C98" stroke-width=".6"/><path d="M3.500 8 l4-3.500 v2.300 h4.500 v2.400 h-4.500 v2.300z" fill="#fff"/></svg>
<svg style="left:881px;top:242px" width="16" height="16" viewBox="0 0 16 16"><path d="M0.500 5 q0-1.500 1.500-1.500 h3 l1.500 1.500 h6 v9 h-12z" fill="#F8D878" stroke="#C48A1C"/><path d="M0.500 14 l2.500-7 h11.500 l-2.500 7z" fill="#FBE9A0" stroke="#C48A1C" stroke-width=".8"/><path d="M10 0 l4.500 4 h-2.500 q0 6-4 8 q1-4 0-8 h-2.500z" fill="#28B028" stroke="#0C700C" stroke-width=".6"/></svg>
<svg style="left:905px;top:243px" width="16" height="16" viewBox="0 0 16 16"><path d="M0.500 4 h6 l1.500 1.500 h5 v8 h-12.500z" fill="#ECECEC" stroke="#A8A8A8"/><path d="M0.500 13.500 l2.500-6 h11.500 l-2.500 6z" fill="#FAFAFA" stroke="#A8A8A8" stroke-width=".8"/><path d="M12.500 0 v6 M9.500 3 h6 M10.400 0.900 l4.200 4.200 M14.600 0.900 l-4.200 4.200" stroke="#909090" stroke-width=".9"/><circle cx="12.500" cy="3" r="1.300" fill="#fff"/></svg>
<svg style="left:928px;top:243px" width="16" height="15" viewBox="0 0 16 15"><rect x="0.500" y="0.500" width="15" height="14" fill="#fff" stroke="#1C6CE0"/><rect x="0" y="0" width="16" height="3.500" fill="#2C7CF0"/><rect x="3" y="5" width="2" height="3" fill="#9090C8"/><rect x="7" y="5" width="2" height="3" fill="#1840D0"/><rect x="11" y="5" width="2" height="3" fill="#18A018"/><rect x="3" y="10" width="2" height="3" fill="#E85818"/><rect x="7" y="10" width="2" height="3" fill="#101890"/><rect x="11" y="10" width="2" height="3" fill="#D8A018"/></svg>
<svg style="left:945px;top:249px" width="5" height="3" viewBox="0 0 5 3"><path d="M0 0h5l-2.500 3z" fill="#000"/></svg>
<div style="left:559px;top:270px;width:403px;height:156px;background:#fff;"></div>
<div class="t" style="left:571px;top:262px;height:16px;line-height:16px;clip-path:inset(8px 0 0 0);font-weight:bold;"><span class="c" style="letter-spacing:1px">硬盘</span><span style="margin-left:10px;letter-spacing:-0.8px">(5)</span></div>
<div style="left:569px;top:262px;width:55px;height:15px;border:1px dotted #000;clip-path:inset(8px 0 0 0);"></div>
<div style="left:563px;top:282px;width:330px;height:1px;background:linear-gradient(90deg,#9CC0F0 0,#C4DAF8 45%,#fff 100%);"></div>
<div style="left:947px;top:268px;width:11px;height:8px;border:1px solid #000;clip-path:inset(2px 0 0 0);"></div>
<svg style="left:566px;top:306px" width="48" height="28" viewBox="0 0 48 28"><defs><linearGradient id="dv0a" x1="0" y1="0" x2="1" y2="1"><stop offset="0" stop-color="#F6F6F8"/><stop offset="1" stop-color="#B0B0B6"/></linearGradient><linearGradient id="dv0b" x1="0" y1="0" x2="1" y2=".3"><stop offset="0" stop-color="#3C8CA8"/><stop offset=".5" stop-color="#1E6480"/><stop offset="1" stop-color="#2A8080"/></linearGradient><linearGradient id="dv0c" x1="0" y1="0" x2="1" y2=".3"><stop offset="0" stop-color="#E6E6EE"/><stop offset=".5" stop-color="#CFCFDA"/><stop offset="1" stop-color="#E0E0E8"/></linearGradient></defs><path d="M4 22 L26 28 L46 16 L46 18 L28 28 H24 L4 23z" fill="#C8C8CC" opacity=".7"/><path d="M2 13.500 L22 4.500 Q24 4 26 4.300 L45 8 Q47 8.500 46.800 10 L46.500 14.500 Q46.500 16 45 17 L29.500 26.500 Q27.500 27.500 25.500 27 L4 21 Q2.500 20.500 2.300 19z" fill="#DCDCE0" stroke="#A0A0A6" stroke-width=".9"/><path d="M29.500 19.500 L46.500 9.300 L46.200 14.500 Q46 15.800 45 16.500 L29.200 26.300 Q28.500 23 29.500 19.500z" fill="url(#dv0a)"/><path d="M29.300 25.500 L46 15.200" stroke="#8C8C92" stroke-width="1"/><path d="M2.800 13.500 L22 5 Q24 4.500 26 4.800 L45.500 8.700 L29.500 19 Q28 19.800 26 19.300z" fill="#F0F0F2"/><path d="M12 12.300 L24 7.300 Q25.500 6.800 27 7.100 L39.500 9.800 L29 15.800 Q27.500 16.500 26 16.200z" fill="#E2E2E7"/><ellipse cx="25.300" cy="5.600" rx="3.600" ry="1.400" fill="#D2D2D7" stroke="#A6A6AC" stroke-width=".6"/><path d="M2.800 14.200 L27 20 Q28.500 20.600 28.300 22 L27.800 26.300 L4 20.600 Q2.800 20.200 2.800 18.800z" fill="url(#dv0b)" stroke="#96969C" stroke-width=".7"/><rect x="24.200" y="19.800" width="2.800" height="5.600" rx=".8" fill="#123012"/><rect x="24.200" y="19.800" width="1.800" height="5.600" rx=".8" fill="#44E018"/><path d="M2.800 14.200 L10 12.500 L18 15 L27 20 L26.500 21.500 L3 16z" fill="#2E7A94"/><path d="M3.800 2.600 Q6.500 0.600 9.800 2.600 L9.300 8 Q6.500 6.300 3.400 8z" fill="#E8501C"/><path d="M4.500 3 Q6.500 1.800 8.500 2.800 L8.300 5 Q6.500 4.300 4.300 5.300z" fill="#F8A050"/><path d="M10.800 3.400 Q13.500 5.200 17 2.800 L16.300 9 Q13.500 10.600 10.300 9.200z" fill="#64B428"/><path d="M11.500 4.800 Q13.500 5.800 16 4.500 L15.800 6.500 Q13.500 7.500 11.300 6.800z" fill="#A8DC70"/><path d="M2.600 9.400 Q5.500 7.600 8.800 9.400 L8 15.200 Q5.500 13.800 1.800 15.400z" fill="#2480D8"/><path d="M3.300 10 Q5.500 9 8 10 L7.700 12 Q5.500 11.200 3 12.200z" fill="#88C4F4"/><path d="M9.800 10.200 Q12.800 11.800 16 9.800 L15.200 15.800 Q12.500 17.400 9 16z" fill="#F8C418"/><path d="M10.500 11.500 Q12.800 12.500 15.200 11.300 L15 13 Q12.800 14 10.300 13.300z" fill="#FCE47C"/></svg>
<div class="t" style="left:620px;top:296px;height:16px;line-height:16px;">WINDOWS (C:)</div>
<div style="left:621px;top:310px;width:116px;height:10px;background:#fff;border:1px solid #0A246A;"><div style="left:0;top:0;width:21px;height:8px;background:#0A246A"></div></div>
<div class="t g" style="left:620px;top:321px;height:16px;line-height:16px;">99.6 GB <span class="c">可用，共</span>...</div>
<svg style="left:749px;top:306px" width="48" height="28" viewBox="0 0 48 28"><defs><linearGradient id="dv1a" x1="0" y1="0" x2="1" y2="1"><stop offset="0" stop-color="#F6F6F8"/><stop offset="1" stop-color="#B0B0B6"/></linearGradient><linearGradient id="dv1b" x1="0" y1="0" x2="1" y2=".3"><stop offset="0" stop-color="#3C8CA8"/><stop offset=".5" stop-color="#1E6480"/><stop offset="1" stop-color="#2A8080"/></linearGradient><linearGradient id="dv1c" x1="0" y1="0" x2="1" y2=".3"><stop offset="0" stop-color="#E6E6EE"/><stop offset=".5" stop-color="#CFCFDA"/><stop offset="1" stop-color="#E0E0E8"/></linearGradient></defs><path d="M4 22 L26 28 L46 16 L46 18 L28 28 H24 L4 23z" fill="#C8C8CC" opacity=".7"/><path d="M2 13.500 L22 4.500 Q24 4 26 4.300 L45 8 Q47 8.500 46.800 10 L46.500 14.500 Q46.500 16 45 17 L29.500 26.500 Q27.500 27.500 25.500 27 L4 21 Q2.500 20.500 2.300 19z" fill="#DCDCE0" stroke="#A0A0A6" stroke-width=".9"/><path d="M29.500 19.500 L46.500 9.300 L46.200 14.500 Q46 15.800 45 16.500 L29.200 26.300 Q28.500 23 29.500 19.500z" fill="url(#dv1a)"/><path d="M29.300 25.500 L46 15.200" stroke="#8C8C92" stroke-width="1"/><path d="M2.800 13.500 L22 5 Q24 4.500 26 4.800 L45.500 8.700 L29.500 19 Q28 19.800 26 19.300z" fill="#F0F0F2"/><path d="M12 12.300 L24 7.300 Q25.500 6.800 27 7.100 L39.500 9.800 L29 15.800 Q27.500 16.500 26 16.200z" fill="#E2E2E7"/><ellipse cx="25.300" cy="5.600" rx="3.600" ry="1.400" fill="#D2D2D7" stroke="#A6A6AC" stroke-width=".6"/><path d="M2.800 14.200 L27 20 Q28.500 20.600 28.300 22 L27.800 26.300 L4 20.600 Q2.800 20.200 2.800 18.800z" fill="url(#dv1c)" stroke="#96969C" stroke-width=".7"/><path d="M4.500 16 L24 20.800" stroke="#F4F4F8" stroke-width="1.200"/><rect x="24.200" y="19.800" width="2.800" height="5.600" rx=".8" fill="#123012"/><rect x="24.200" y="19.800" width="1.800" height="5.600" rx=".8" fill="#44E018"/></svg>
<div class="t" style="left:803px;top:296px;height:16px;line-height:16px;">WORK (E:)</div>
<div style="left:804px;top:310px;width:116px;height:10px;background:#fff;border:1px solid #0A246A;"><div style="left:0;top:0;width:31px;height:8px;background:#0A246A"></div></div>
<div class="t g" style="left:803px;top:321px;height:16px;line-height:16px;">71.3 GB <span class="c">可用，共</span>...</div>
<svg style="left:566px;top:358px" width="48" height="28" viewBox="0 0 48 28"><defs><linearGradient id="dv2a" x1="0" y1="0" x2="1" y2="1"><stop offset="0" stop-color="#F6F6F8"/><stop offset="1" stop-color="#B0B0B6"/></linearGradient><linearGradient id="dv2b" x1="0" y1="0" x2="1" y2=".3"><stop offset="0" stop-color="#3C8CA8"/><stop offset=".5" stop-color="#1E6480"/><stop offset="1" stop-color="#2A8080"/></linearGradient><linearGradient id="dv2c" x1="0" y1="0" x2="1" y2=".3"><stop offset="0" stop-color="#E6E6EE"/><stop offset=".5" stop-color="#CFCFDA"/><stop offset="1" stop-color="#E0E0E8"/></linearGradient></defs><path d="M4 22 L26 28 L46 16 L46 18 L28 28 H24 L4 23z" fill="#C8C8CC" opacity=".7"/><path d="M2 13.500 L22 4.500 Q24 4 26 4.300 L45 8 Q47 8.500 46.800 10 L46.500 14.500 Q46.500 16 45 17 L29.500 26.500 Q27.500 27.500 25.500 27 L4 21 Q2.500 20.500 2.300 19z" fill="#DCDCE0" stroke="#A0A0A6" stroke-width=".9"/><path d="M29.500 19.500 L46.500 9.300 L46.200 14.500 Q46 15.800 45 16.500 L29.200 26.300 Q28.500 23 29.500 19.500z" fill="url(#dv2a)"/><path d="M29.300 25.500 L46 15.200" stroke="#8C8C92" stroke-width="1"/><path d="M2.800 13.500 L22 5 Q24 4.500 26 4.800 L45.500 8.700 L29.500 19 Q28 19.800 26 19.300z" fill="#F0F0F2"/><path d="M12 12.300 L24 7.300 Q25.500 6.800 27 7.100 L39.500 9.800 L29 15.800 Q27.500 16.500 26 16.200z" fill="#E2E2E7"/><ellipse cx="25.300" cy="5.600" rx="3.600" ry="1.400" fill="#D2D2D7" stroke="#A6A6AC" stroke-width=".6"/><path d="M2.800 14.200 L27 20 Q28.500 20.600 28.300 22 L27.800 26.300 L4 20.600 Q2.800 20.200 2.800 18.800z" fill="url(#dv2c)" stroke="#96969C" stroke-width=".7"/><path d="M4.500 16 L24 20.800" stroke="#F4F4F8" stroke-width="1.200"/><rect x="24.200" y="19.800" width="2.800" height="5.600" rx=".8" fill="#123012"/><rect x="24.200" y="19.800" width="1.800" height="5.600" rx=".8" fill="#44E018"/></svg>
<div class="t" style="left:620px;top:348px;height:16px;line-height:16px;">PROJECT (F:)</div>
<div style="left:621px;top:362px;width:116px;height:10px;background:#fff;border:1px solid #0A246A;"><div style="left:0;top:0;width:113px;height:8px;background:#0A246A"></div></div>
<div class="t g" style="left:620px;top:373px;height:16px;line-height:16px;">3.31 GB <span class="c">可用，共</span>...</div>
<svg style="left:749px;top:358px" width="48" height="28" viewBox="0 0 48 28"><defs><linearGradient id="dv3a" x1="0" y1="0" x2="1" y2="1"><stop offset="0" stop-color="#F6F6F8"/><stop offset="1" stop-color="#B0B0B6"/></linearGradient><linearGradient id="dv3b" x1="0" y1="0" x2="1" y2=".3"><stop offset="0" stop-color="#3C8CA8"/><stop offset=".5" stop-color="#1E6480"/><stop offset="1" stop-color="#2A8080"/></linearGradient><linearGradient id="dv3c" x1="0" y1="0" x2="1" y2=".3"><stop offset="0" stop-color="#E6E6EE"/><stop offset=".5" stop-color="#CFCFDA"/><stop offset="1" stop-color="#E0E0E8"/></linearGradient></defs><path d="M4 22 L26 28 L46 16 L46 18 L28 28 H24 L4 23z" fill="#C8C8CC" opacity=".7"/><path d="M2 13.500 L22 4.500 Q24 4 26 4.300 L45 8 Q47 8.500 46.800 10 L46.500 14.500 Q46.500 16 45 17 L29.500 26.500 Q27.500 27.500 25.500 27 L4 21 Q2.500 20.500 2.300 19z" fill="#DCDCE0" stroke="#A0A0A6" stroke-width=".9"/><path d="M29.500 19.500 L46.500 9.300 L46.200 14.500 Q46 15.800 45 16.500 L29.200 26.300 Q28.500 23 29.500 19.500z" fill="url(#dv3a)"/><path d="M29.300 25.500 L46 15.200" stroke="#8C8C92" stroke-width="1"/><path d="M2.800 13.500 L22 5 Q24 4.500 26 4.800 L45.500 8.700 L29.500 19 Q28 19.800 26 19.300z" fill="#F0F0F2"/><path d="M12 12.300 L24 7.300 Q25.500 6.800 27 7.100 L39.500 9.800 L29 15.800 Q27.500 16.500 26 16.200z" fill="#E2E2E7"/><ellipse cx="25.300" cy="5.600" rx="3.600" ry="1.400" fill="#D2D2D7" stroke="#A6A6AC" stroke-width=".6"/><path d="M2.800 14.200 L27 20 Q28.500 20.600 28.300 22 L27.800 26.300 L4 20.600 Q2.800 20.200 2.800 18.800z" fill="url(#dv3c)" stroke="#96969C" stroke-width=".7"/><path d="M4.500 16 L24 20.800" stroke="#F4F4F8" stroke-width="1.200"/><rect x="24.200" y="19.800" width="2.800" height="5.600" rx=".8" fill="#123012"/><rect x="24.200" y="19.800" width="1.800" height="5.600" rx=".8" fill="#44E018"/></svg>
<div class="t" style="left:803px;top:348px;height:16px;line-height:16px;">BACKUP (G:)</div>
<div style="left:804px;top:362px;width:116px;height:10px;background:#fff;border:1px solid #0A246A;"><div style="left:0;top:0;width:49px;height:8px;background:#0A246A"></div></div>
<div class="t g" style="left:803px;top:373px;height:16px;line-height:16px;">112 GB <span class="c">可用，共</span> ...</div>
<svg style="left:566px;top:410px" width="48" height="16" viewBox="0 0 48 16"><defs><linearGradient id="dv4a" x1="0" y1="0" x2="1" y2="1"><stop offset="0" stop-color="#F6F6F8"/><stop offset="1" stop-color="#B0B0B6"/></linearGradient><linearGradient id="dv4b" x1="0" y1="0" x2="1" y2=".3"><stop offset="0" stop-color="#3C8CA8"/><stop offset=".5" stop-color="#1E6480"/><stop offset="1" stop-color="#2A8080"/></linearGradient><linearGradient id="dv4c" x1="0" y1="0" x2="1" y2=".3"><stop offset="0" stop-color="#E6E6EE"/><stop offset=".5" stop-color="#CFCFDA"/><stop offset="1" stop-color="#E0E0E8"/></linearGradient></defs><path d="M4 22 L26 28 L46 16 L46 18 L28 28 H24 L4 23z" fill="#C8C8CC" opacity=".7"/><path d="M2 13.500 L22 4.500 Q24 4 26 4.300 L45 8 Q47 8.500 46.800 10 L46.500 14.500 Q46.500 16 45 17 L29.500 26.500 Q27.500 27.500 25.500 27 L4 21 Q2.500 20.500 2.300 19z" fill="#DCDCE0" stroke="#A0A0A6" stroke-width=".9"/><path d="M29.500 19.500 L46.500 9.300 L46.200 14.500 Q46 15.800 45 16.500 L29.200 26.300 Q28.500 23 29.500 19.500z" fill="url(#dv4a)"/><path d="M29.300 25.500 L46 15.200" stroke="#8C8C92" stroke-width="1"/><path d="M2.800 13.500 L22 5 Q24 4.500 26 4.800 L45.500 8.700 L29.500 19 Q28 19.800 26 19.300z" fill="#F0F0F2"/><path d="M12 12.300 L24 7.300 Q25.500 6.800 27 7.100 L39.500 9.800 L29 15.800 Q27.500 16.500 26 16.200z" fill="#E2E2E7"/><ellipse cx="25.300" cy="5.600" rx="3.600" ry="1.400" fill="#D2D2D7" stroke="#A6A6AC" stroke-width=".6"/><path d="M2.800 14.200 L27 20 Q28.500 20.600 28.300 22 L27.800 26.300 L4 20.600 Q2.800 20.200 2.800 18.800z" fill="url(#dv4c)" stroke="#96969C" stroke-width=".7"/><path d="M4.500 16 L24 20.800" stroke="#F4F4F8" stroke-width="1.200"/><rect x="24.200" y="19.800" width="2.800" height="5.600" rx=".8" fill="#123012"/><rect x="24.200" y="19.800" width="1.800" height="5.600" rx=".8" fill="#44E018"/></svg>
<div class="t" style="left:620px;top:400px;height:16px;line-height:16px;">BACKUPS (H:)</div>
<div style="left:621px;top:414px;width:116px;height:10px;background:#fff;border:1px solid #0A246A;"><div style="left:0;top:0;width:23px;height:8px;background:#0A246A"></div></div>
<div style="left:962px;top:270px;width:16px;height:156px;background:repeating-conic-gradient(#fff 0 25%,#D4D0C8 0 50%) 0 0/2px 2px;"></div>
<div style="left:962px;top:270px;width:16px;height:16px;background:#D4D0C8;border:1px solid;border-color:#fff #404040 #404040 #fff;box-shadow:inset -1px -1px 0 #808080;"><svg style="left:3px;top:4px" width="7" height="4" viewBox="0 0 7 4"><path d="M0 4h7l-3.500-4z" fill="#000"/></svg></div>
<div style="left:962px;top:291px;width:16px;height:67px;background:#D4D0C8;border:1px solid;border-color:#fff #404040 #404040 #fff;box-shadow:inset -1px -1px 0 #808080;"></div>
<div style="left:962px;top:410px;width:16px;height:16px;background:#D4D0C8;border:1px solid;border-color:#fff #404040 #404040 #fff;box-shadow:inset -1px -1px 0 #808080;"><svg style="left:3px;top:5px" width="7" height="4" viewBox="0 0 7 4"><path d="M0 0h7l-3.500 4z" fill="#000"/></svg></div>
<div class="t" style="left:561px;top:434px;height:16px;line-height:16px;"><span class="c">文件名</span>(N):</div>
<div style="left:642px;top:432px;width:240px;height:20px;background:#fff;border:1px solid;border-color:#808080 #fff #fff #808080;box-shadow:inset 1px 1px 0 #404040,inset -1px -1px 0 #D4D0C8;"></div>
<div class="t" style="left:561px;top:458px;height:16px;line-height:16px;"><span class="c">文件类型</span>(T):</div>
<div style="left:642px;top:456px;width:240px;height:20px;background:#fff;border:1px solid;border-color:#808080 #fff #fff #808080;box-shadow:inset 1px 1px 0 #404040,inset -1px -1px 0 #D4D0C8;"></div>
<div class="t" style="left:646px;top:459px;height:16px;line-height:16px;">All Files (*.*)</div>
<div style="left:864px;top:458px;width:16px;height:16px;background:#D4D0C8;border:1px solid;border-color:#fff #404040 #404040 #fff;box-shadow:inset -1px -1px 0 #808080;"><svg style="left:3px;top:5px" width="7" height="4" viewBox="0 0 7 4"><path d="M0 0h7l-3.500 4z" fill="#000"/></svg></div>
<div style="left:897px;top:432px;width:75px;height:23px;background:#000;"></div>
<div style="left:898px;top:433px;width:73px;height:21px;background:#D4D0C8;border:1px solid;border-color:#fff #404040 #404040 #fff;box-shadow:inset -1px -1px 0 #808080;"></div>
<div class="t" style="left:897px;top:436px;height:16px;line-height:16px;width:75px;text-align:center;"><span class="c">打开</span>(O)</div>
<div style="left:897px;top:461px;width:75px;height:23px;background:#D4D0C8;border:1px solid;border-color:#fff #404040 #404040 #fff;box-shadow:inset -1px -1px 0 #808080;"></div>
<div class="t" style="left:897px;top:465px;height:16px;line-height:16px;width:75px;text-align:center;"><span class="c">取消</span></div>
<svg style="left:976px;top:478px" width="13" height="13" viewBox="0 0 13 13"><path d="M12 1 L1 12 M12 5 L5 12 M12 9 L9 12" stroke="#808080" stroke-width="1.200"/><path d="M12 0 L0 12 M12 4 L4 12 M12 8 L8 12" stroke="#fff" stroke-width="1"/></svg>
<!-- red annotation boxes -->
<div style="left:8px;top:483px;width:163px;height:26px;border:3px solid #FF2D2D;"></div>
<div style="left:43px;top:531px;width:179px;height:26px;border:3px solid #FF2D2D;"></div>
<div style="left:291px;top:95px;width:158px;height:31px;border:3px solid #FF2D2D;"></div>
<!-- outer scrollbars and window frame -->
<div style="left:1243px;top:0px;width:1px;height:893px;background:#fff;"></div>
<div style="left:1244px;top:0px;width:16px;height:893px;background:#F0F0F0;border-left:1px solid #E4E4E4;"></div>
<div style="left:1244px;top:-4px;width:15px;height:783px;border:1px solid #979797;border-radius:2px;background:linear-gradient(90deg,#F8F8F8 0,#EDEDEE 40%,#D2D2D6 45%,#C4C4CA 100%);box-shadow:inset 1px 0 0 #fff;"></div>
<div style="left:1248px;top:384px;width:7px;height:1px;background:#38383C;"></div>
<div style="left:1248px;top:385px;width:7px;height:1px;background:#F4F4F4;"></div>
<div style="left:1248px;top:387px;width:7px;height:1px;background:#38383C;"></div>
<div style="left:1248px;top:388px;width:7px;height:1px;background:#F4F4F4;"></div>
<div style="left:1248px;top:390px;width:7px;height:1px;background:#38383C;"></div>
<div style="left:1248px;top:391px;width:7px;height:1px;background:#F4F4F4;"></div>
<svg style="left:1248px;top:881px" width="9" height="6" viewBox="0 0 9 6"><path d="M0.500 1 h8 l-4 4z" fill="#303030"/></svg>
<div style="left:0px;top:893px;width:1244px;height:16px;background:#F0F0F0;border-top:1px solid #E4E4E4;"></div>
<div style="left:8px;top:893px;width:1191px;height:15px;border:1px solid #979797;border-radius:2px;background:linear-gradient(180deg,#F8F8F8 0,#EDEDEE 40%,#D2D2D6 45%,#C4C4CA 100%);box-shadow:inset 0 1px 0 #fff;"></div>
<div style="left:599px;top:897px;width:1px;height:7px;background:#38383C;"></div>
<div style="left:600px;top:897px;width:1px;height:7px;background:#F4F4F4;"></div>
<div style="left:602px;top:897px;width:1px;height:7px;background:#38383C;"></div>
<div style="left:603px;top:897px;width:1px;height:7px;background:#F4F4F4;"></div>
<div style="left:605px;top:897px;width:1px;height:7px;background:#38383C;"></div>
<div style="left:606px;top:897px;width:1px;height:7px;background:#F4F4F4;"></div>
<svg style="left:1232px;top:896px" width="6" height="9" viewBox="0 0 6 9"><path d="M1 0.500 v8 l4-4z" fill="#303030"/></svg>
<div style="left:1244px;top:893px;width:16px;height:16px;background:#F0F0F0;"></div>
<svg style="left:1247px;top:898px" width="11" height="10" viewBox="0 0 11 10"><rect x="8" y="1" width="2" height="2" fill="#B8B8B8"/><rect x="9" y="2" width="1" height="1" fill="#fff"/><rect x="4" y="4" width="2" height="2" fill="#B8B8B8"/><rect x="5" y="5" width="1" height="1" fill="#fff"/><rect x="8" y="4" width="2" height="2" fill="#B8B8B8"/><rect x="9" y="5" width="1" height="1" fill="#fff"/><rect x="0" y="7" width="2" height="2" fill="#B8B8B8"/><rect x="1" y="8" width="1" height="1" fill="#fff"/><rect x="4" y="7" width="2" height="2" fill="#B8B8B8"/><rect x="5" y="8" width="1" height="1" fill="#fff"/><rect x="8" y="7" width="2" height="2" fill="#B8B8B8"/><rect x="9" y="8" width="1" height="1" fill="#fff"/></svg>
<div style="left:1260px;top:0px;width:4px;height:917px;background:#9AAEC8;"></div>
<div style="left:1260px;top:0px;width:1px;height:910px;background:#44505E;"></div>
<div style="left:1261px;top:0px;width:1px;height:910px;background:#CCD8EA;"></div>
<div style="left:0px;top:909px;width:1264px;height:8px;background:#869FBD;"></div>
<div style="left:0px;top:911px;width:1260px;height:4px;background:linear-gradient(90deg,#7F98B6 0,#8AA6C8 6%,#A6C6EA 12%,#9CBCE0 19%,#839CBA 24%,#A2C2E6 29%,#87A0BE 34%,#9DBDE2 40%,#819AB8 46%,#8EAACC 52%,#A4C4E8 58%,#88A2C2 63%,#9FBFE4 69%,#85A0C0 75%,#A8C8EC 82%,#5F86B8 84%,#8CA8CA 88%,#9EBEE2 94%,#86A0C0 100%);"></div>
<div style="left:0px;top:909px;width:1261px;height:1px;background:#485868;"></div>
<div style="left:0px;top:910px;width:1260px;height:1px;background:#C4D4E8;"></div>
<div style="left:0px;top:915px;width:1262px;height:1px;background:#C0D0E4;"></div>
<div style="left:0px;top:916px;width:1264px;height:1px;background:#0C1014;"></div>
</body></html>
